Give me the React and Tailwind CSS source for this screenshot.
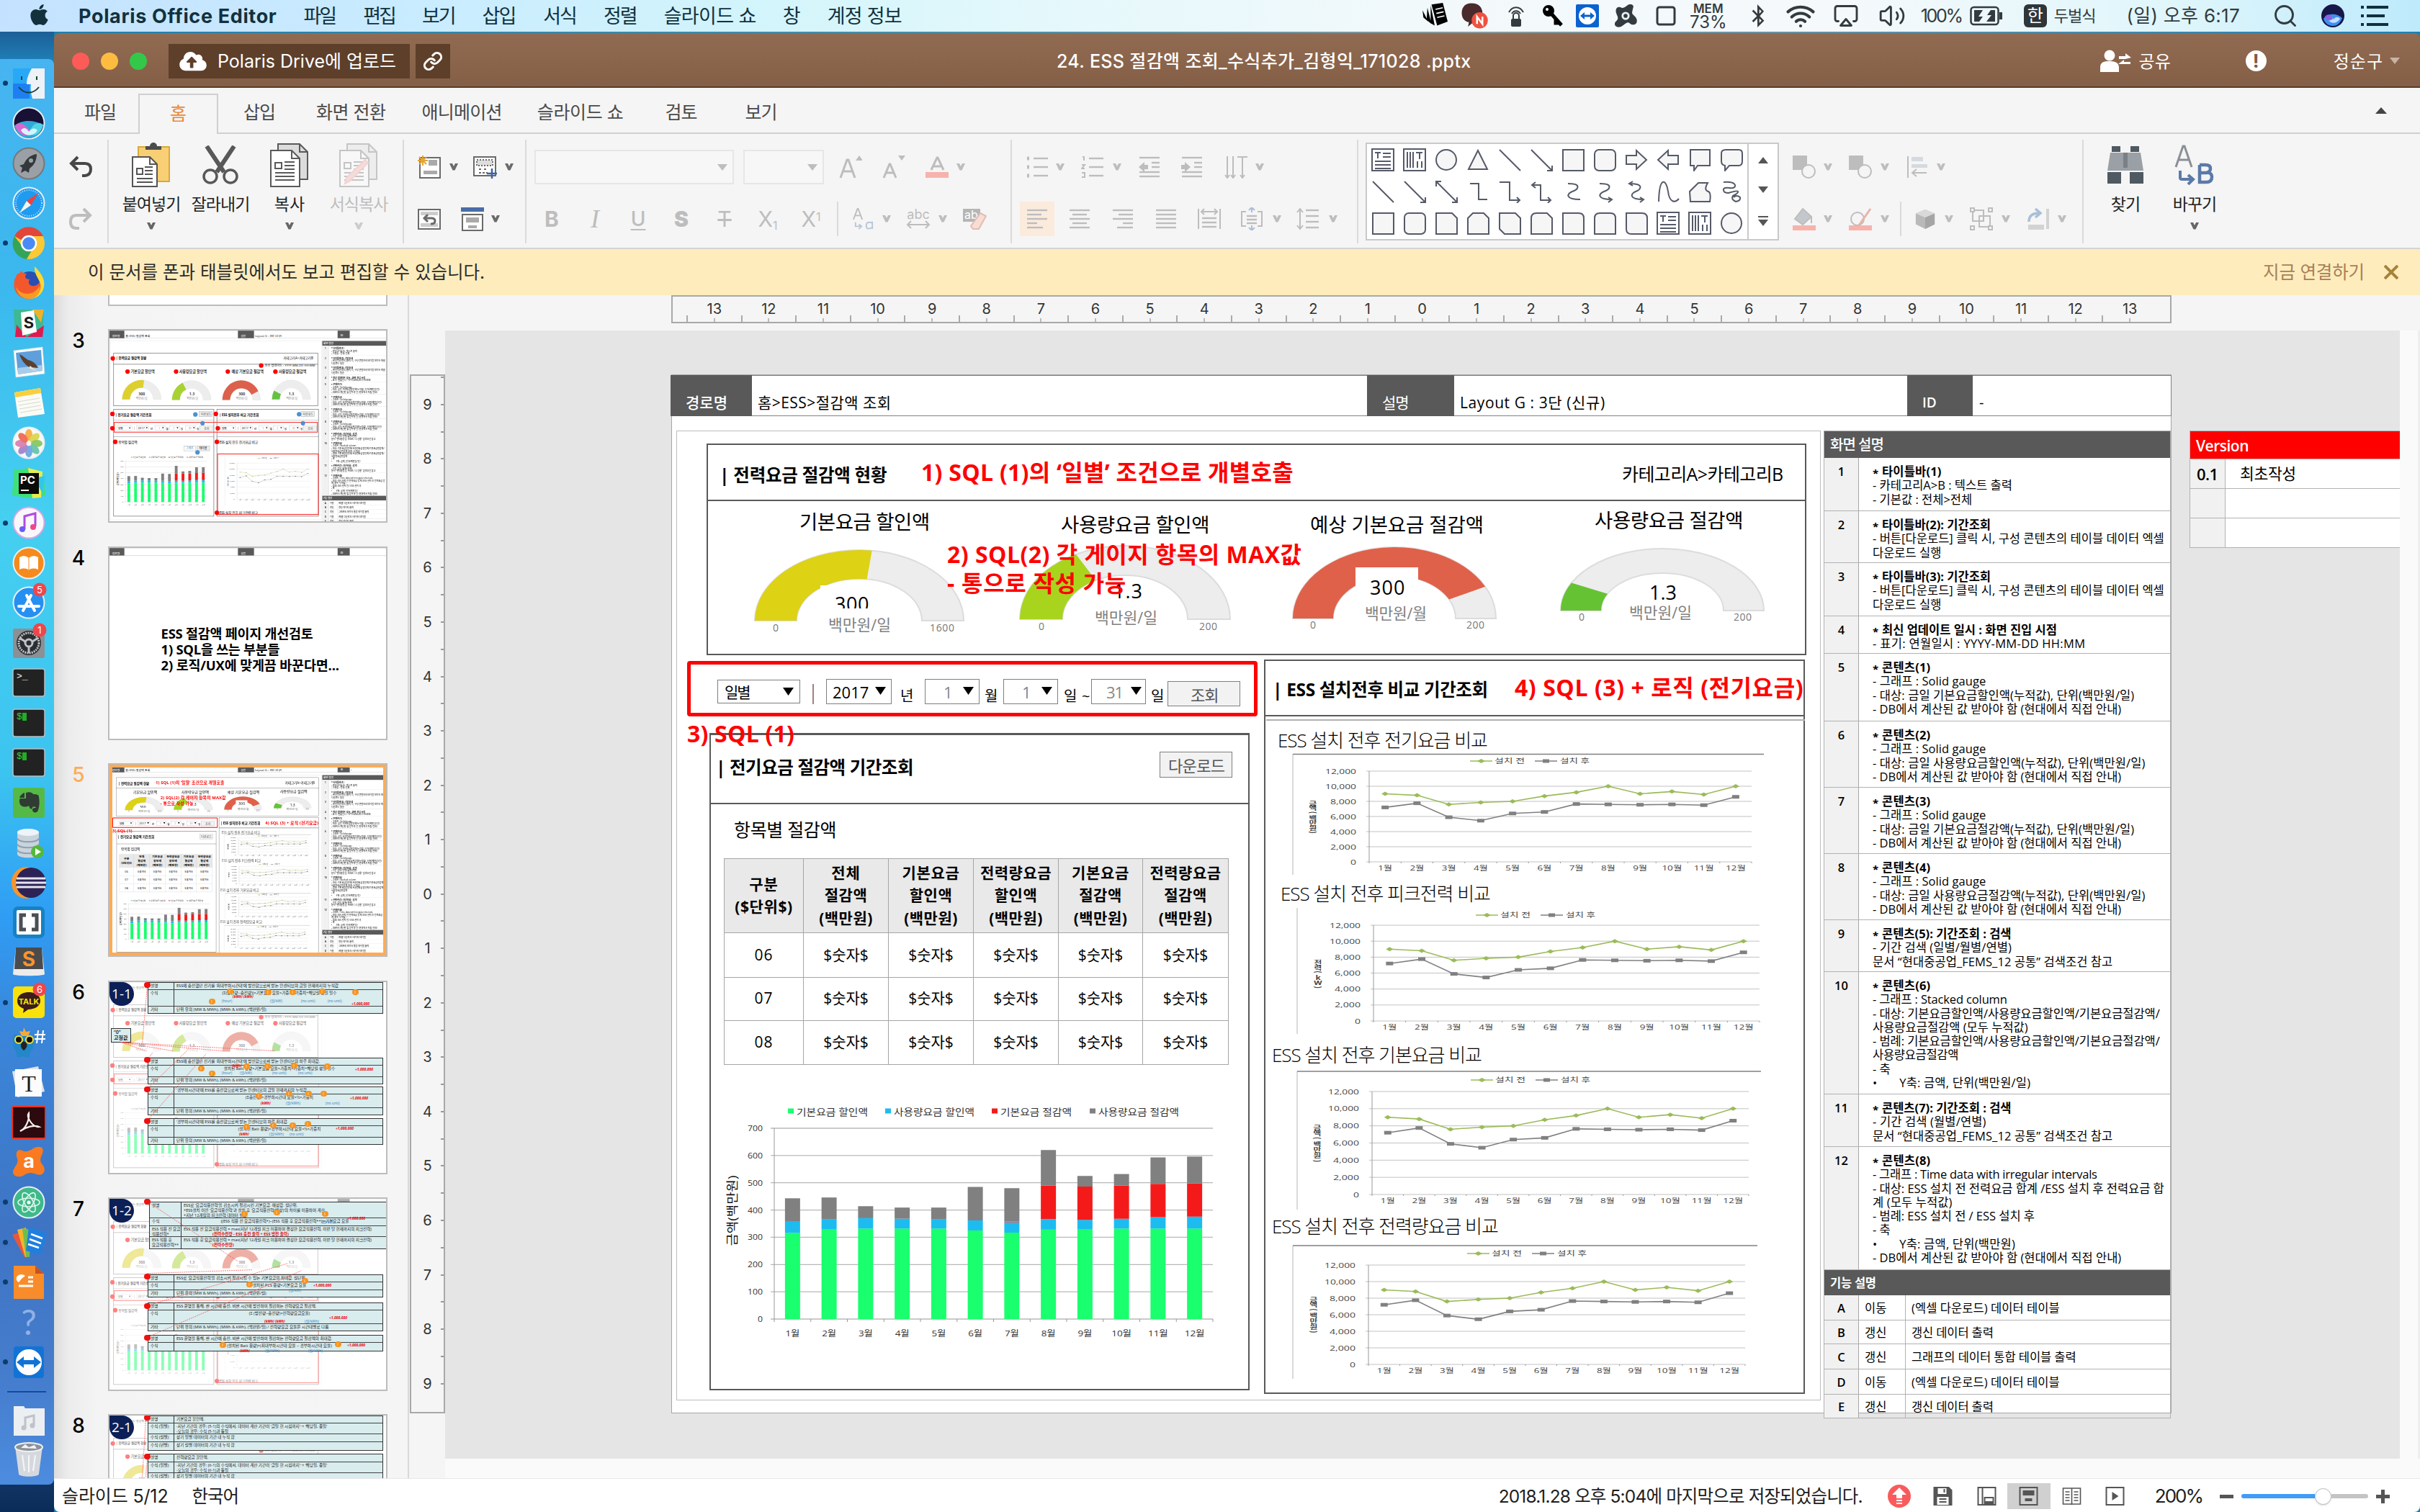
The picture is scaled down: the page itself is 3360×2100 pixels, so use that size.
import React, { useLayoutEffect, useRef } from "react";
import { FaApple, FaBluetoothB, FaCloudUploadAlt } from "react-icons/fa";
import { Wifi, Search, Volume2, Link, Airplay } from "lucide-react";

/* ---------- text helpers ---------- */

// Spreads a single line of text over a given width by adjusting its tracking.
function Fit({ w, className = "", children }) {
  const ref = useRef(null);
  useLayoutEffect(() => {
    const el = ref.current;
    el.style.letterSpacing = "0px";
    const n = el.textContent.length;
    if (w && n > 1) el.style.letterSpacing = (w - el.offsetWidth) / (n - 1) + "px";
  }, [w, children]);
  return (
    <span className={"inline-block whitespace-pre shrink-0 " + className}>
      <span ref={ref} className="inline-block whitespace-pre">{children}</span>
    </span>
  );
}

const OX = 932;
const OY = 520;

// A slide object placed on the canvas by its frame.
function Obj({ x, y, w, h, className = "", children }) {
  return (
    <div className={"absolute " + className} style={{ left: x - OX, top: y - OY, width: w, height: h }}>
      {children}
    </div>
  );
}

// A line of slide text: left edge, vertical centre and width.
function T({ x, cy, w, s, className = "", children }) {
  return (
    <div className={"absolute flex items-center h-10 leading-none " + className} style={{ left: x - OX, top: cy - 20 - OY, fontSize: s }}>
      <Fit w={w}>{children}</Fit>
    </div>
  );
}

const Chev = ({ className = "" }) => (
  <svg viewBox="0 0 14 10" className={"w-[14px] h-[10px] shrink-0 " + className} fill="currentColor">
    <path d="M1 0h4l2 4 2-4h4L8.500 9.500h-3z" />
  </svg>
);

const Svg = ({ vb = "0 0 32 32", className = "w-8 h-8", children, ...p }) => (
  <svg viewBox={vb} className={"shrink-0 " + className} fill="none" stroke="currentColor" strokeWidth="2" {...p}>
    {children}
  </svg>
);

/* ---------- menu bar ---------- */

function MenuBar() {
  return (
    <header className="h-[44px] shrink-0 flex items-center text-[27px] leading-none text-[#12313d] bg-[linear-gradient(90deg,#c4e2ff_0%,#c9ecff_18%,#d3f5fb_32%,#e4f8fb_43%,#f3f9fb_60%,#f5f9fb_76%,#dff6fb_90%,#bdeafc_100%)]">
      <FaApple className="ml-[39px] w-[31px] h-[33px] -mt-1 shrink-0" />
      <Fit w={275} className="ml-[39px] font-bold text-[27px]">Polaris Office Editor</Fit>
      <Fit w={47} className="ml-[37px]">파일</Fit>
      <Fit w={47} className="ml-[39px]">편집</Fit>
      <Fit w={48} className="ml-[38px]">보기</Fit>
      <Fit w={48} className="ml-[38px]">삽입</Fit>
      <Fit w={48} className="ml-[39px]">서식</Fit>
      <Fit w={48} className="ml-[38px]">정렬</Fit>
      <Fit w={129} className="ml-[38px]">슬라이드 쇼</Fit>
      <span className="ml-[37px]">창</span>
      <Fit w={104} className="ml-[37px]">계정 정보</Fit>
      <div className="ml-auto flex items-center h-full text-[#333b40]">
        <Svg className="w-9 h-9 text-black" fill="currentColor" stroke="none">
          <path d="M12 2l14-2 6 23-13 5z" /><path d="M11 3l5 25-5-3zM7 6l5 20-6-5zM1 9l7 14-6-5z" />
          <path d="M17 8l9-2M18 13l9-2M19 18l9-2" stroke="#fff" strokeWidth="1.500" />
        </Svg>
        <Svg className="ml-[17px] w-10 h-10" stroke="none">
          <path d="M13 2C5 2 2 7 2 13s4 10 8 10l-1 5 6-5c7 0 10-4 10-10S21 2 13 2z" fill="#4a2a2c" />
          <circle cx="22" cy="21" r="9" fill="#f0513f" /><path d="M19 25v-8l6 8v-8" stroke="#fff" strokeWidth="2" />
        </Svg>
        <Svg className="ml-[22px] w-8 h-9"><path d="M6 11c5-9 15-9 20 0M10 13c3-5 9-5 12 0M12 20v-4a4 4 0 0 1 8 0v4" /><rect x="9" y="20" width="14" height="11" rx="2" fill="currentColor" stroke="none" /></Svg>
        <Svg className="ml-[20px] w-8 h-8 text-black"><circle cx="9" cy="9" r="7" fill="currentColor" /><path d="M12 12l15 17M19 20v6h6" strokeWidth="5" /><circle cx="7" cy="7" r="2" fill="#fff" stroke="none" /></Svg>
        <Svg className="ml-[15px] w-8 h-8" stroke="none"><rect width="32" height="32" rx="2" fill="#0b62d0" /><circle cx="16" cy="16" r="12" fill="#fff" /><path d="M6 16l6-5v3.500h8V11l6 5-6 5v-3.500h-8V21z" fill="#0b62d0" /></Svg>
        <Svg className="ml-[19px] w-9 h-9" fill="currentColor" stroke="none"><path d="M20 2c4-1 7 1 5 5l-1 5c0 3 6 5 6 10 0 6-6 6-9 3-4-3-8 5-13 5-6 0-7-5-3-8 4-4-1-7-1-12 0-4 3-6 7-4 4 1 6-3 9-4z" /><circle cx="16" cy="16" r="5" fill="#e8f3f5" /><circle cx="16" cy="16" r="2.500" /></Svg>
        <Svg className="ml-[22px] w-8 h-8"><rect x="4" y="4" width="24" height="24" rx="3" strokeWidth="3" /></Svg>
        <div className="ml-[18px] w-[50px] flex flex-col items-center font-semibold leading-none"><span className="text-[17px] leading-[16px]">MEM</span><span className="text-[24px] leading-[21px] font-normal">73%</span></div>
        <FaBluetoothB className="ml-[32px] w-6 h-8" />
        <Wifi className="ml-[24px] w-[46px] h-[42px]" strokeWidth={2.4} />
        <Airplay className="ml-[20px] w-10 h-9" strokeWidth={1.9} fill="none" />
        <Volume2 className="ml-[22px] w-[44px] h-[38px]" strokeWidth={1.8} />
        <Fit w={59} className="ml-[18px] text-[25px]">100%</Fit>
        <Svg vb="0 0 46 28" className="ml-[11px] w-[46px] h-7"><rect x="1.500" y="2" width="38" height="24" rx="4" strokeWidth="2.500" /><path d="M42 10v8h2v-8z" fill="currentColor" /><path d="M6 6h12l-6 9h6l-5 7H6zM35 22H23l7-9h-6l5-7h6z" fill="currentColor" stroke="none" /></Svg>
        <div className="ml-[29px] w-8 h-[32px] rounded-[6px] bg-[#2f3539] text-white text-[24px] flex items-center justify-center">한</div>
        <Fit w={59} className="ml-[10px] text-[22px]">두벌식</Fit>
        <Fit w={157} className="ml-[43px] text-[26px]">(일) 오후 6:17</Fit>
        <Search className="ml-[45px] w-9 h-9" strokeWidth={1.9} />
        <svg viewBox="0 0 32 32" className="ml-[32px] w-8 h-8"><circle cx="16" cy="16" r="16" fill="#17174a" /><path d="M3 20c6-8 18-8 26-1-3 8-8 11-13 11S5 27 3 20z" fill="#3f8ff0" /><path d="M9 21c3-5 6-4 8 0 3-4 6-4 9-1-4 7-13 8-17 1z" fill="#bfe0ff" /><path d="M5 17c5-6 9-1 11 3-4 4-9 3-11-3z" fill="#8d62e0" /></svg>
        <Svg vb="0 0 38 32" className="ml-[23px] mr-[44px] w-[38px] h-8 text-[#10303c]"><path d="M0 4h4M8 4h30M0 16h4M8 16h25M0 28h4M8 28h30" strokeWidth="4" /></Svg>
      </div>
    </header>
  );
}

/* ---------- dock ---------- */

const Round = ({ fill, stroke = "#e9eef2", children }) => (
  <><circle cx="23" cy="23" r="21.500" fill={fill} stroke={stroke} strokeWidth="2" />{children}</>
);
const Badge = ({ n }) => (
  <><circle cx="38" cy="5" r="9.500" fill="#f0464b" /><text x="38" y="9.500" fontSize="13" textAnchor="middle" fill="#fff">{n}</text></>
);
const Term = ({ label, color }) => (
  <><rect x="1" y="4" width="44" height="38" rx="3" fill="#222" stroke="#b9bec2" strokeWidth="1.500" /><text x="6" y="18" fontSize="13" fontFamily="Liberation Mono" fill={color}>{label}</text></>
);

const dockIcons = [
  { dot: true, el: <><rect x="1" y="2" width="44" height="42" rx="2" fill="#28a9f7" /><path d="M1 23h23v21H1z" fill="#1f7ff2" /><path d="M27 2c-5 9-7 15-7 22h6c-1 7 0 13 2 20h17V2z" fill="#eef1f6" /><path d="M13 13v5M34 13v5M9 28c8 10 20 10 28 0" fill="none" stroke="#143" strokeWidth="2" /></> },
  { el: <Round fill="#191036"><path d="M3 27c9-9 28-9 40-1-3 11-11 18-20 18S6 38 3 27z" fill="#2fa9d8" /><path d="M4 26c9-7 17 2 22 10-4 8-18 5-22-10z" fill="#d668d0" /><path d="M43 25c-10-6-16 2-20 11 6 8 17 3 20-11z" fill="#4fd3e6" /><path d="M12 33c4-5 8-3 11 2 4-5 8-6 12-2-5 9-18 9-23 0z" fill="#d5f4ff" /></Round> },
  { el: <Round fill="#9aa0a6" stroke="#777"><path d="M34 10c-9 1-15 7-18 14l-6 2 4 3-2 7 6-3 5 3 1-6c6-4 10-11 10-20z" fill="#34383c" /><circle cx="26" cy="19" r="3" fill="#9aa0a6" /></Round> },
  { el: <Round fill="#1f9bf0"><circle cx="23" cy="23" r="18" fill="none" stroke="#bfe6ff" strokeDasharray="1 2" strokeWidth="2" /><path d="M36 9L20 20l6 6z" fill="#f0413a" /><path d="M10 37l10-17 6 6z" fill="#f3f3f3" /></Round> },
  { dot: true, el: <><circle cx="23" cy="23" r="22" fill="#fcc934" /><path d="M3 13A22 22 0 0 1 43 13H23a10 10 0 0 0-9 6z" fill="#e2463a" /><path d="M3 13a22 22 0 0 0 17 32l8-14a10 10 0 0 1-14-4z" fill="#35a458" /><circle cx="23" cy="23" r="10" fill="#4a8af4" stroke="#fff" strokeWidth="2.500" /></> },
  { el: <><circle cx="24" cy="24" r="17" fill="#2a4fb0" /><path d="M12 6c2 3 5 4 8 4-4 5-1 8 4 8-3 5 0 10 7 9 5-1 8-5 8-10 5 16-3 28-16 28C9 45 0 34 3 20c1-5 3-6 4-10 2 1 4-1 5-4z" fill="#f3582c" /><path d="M31 0c8 8 15 17 13 28-2 12-12 17-20 17 12-5 17-12 15-21-2-7-9-14-8-24z" fill="#fcd836" /><path d="M5 28c4 8 12 12 22 9 5-2 9-6 11-10 2 12-6 18-15 18S7 39 5 28z" fill="#fb9a20" /></> },
  { el: <><path d="M2 4h42l-2 38H4z" fill="#3eb991" /><path d="M28 4h16l-4 18z" fill="#ecb22e" /><path d="M4 42l2-17 14 17zM20 42h22l2-16z" fill="#e01a50" /><path d="M12 8l18-3 4 30-20 5z" fill="#fff" /><text x="23" y="30" fontSize="22" fontWeight="bold" textAnchor="middle" fill="#1b1b1b">S</text></> },
  { el: <><path d="M2 6l40-5 3 37-40 5z" fill="#fff" stroke="#c8d4dc" strokeDasharray="2 1" /><path d="M5 9l35-4 2 29-34 5z" fill="#5f9fdc" /><path d="M8 30l33-4 1 8-34 5z" fill="#a8cdea" /><path d="M10 11c6 3 9 6 12 8 6 1 11 5 14 11l-12-1c-6-3-11-9-14-18z" fill="#5a4030" /><path d="M25 27l9 8-11-5z" fill="#e8e0d0" /></> },
  { el: <><path d="M3 8l36-6 6 36-37 5z" fill="#fbfbf6" /><path d="M3 8l36-6 1 7L4 15z" fill="#f9cf3f" /><path d="M8 21l30-5M9 26l30-5M10 31l30-5M11 36l30-5" stroke="#d8d8d0" /></> },
  { el: <Round fill="#f7f7f5"><g opacity=".85"><ellipse cx="23" cy="12" rx="5" ry="8" fill="#f7a72d" /><ellipse cx="31" cy="16" rx="5" ry="8" transform="rotate(50 31 16)" fill="#d9d33a" /><ellipse cx="34" cy="24" rx="8" ry="5" fill="#7ec352" /><ellipse cx="31" cy="32" rx="5" ry="8" transform="rotate(-45 31 32)" fill="#57bfa2" /><ellipse cx="23" cy="35" rx="5" ry="8" fill="#5e9ede" /><ellipse cx="15" cy="32" rx="5" ry="8" transform="rotate(45 15 32)" fill="#9a77c7" /><ellipse cx="12" cy="24" rx="8" ry="5" fill="#d674a8" /><ellipse cx="15" cy="16" rx="5" ry="8" transform="rotate(-45 15 16)" fill="#ef5a43" /></g></Round> },
  { el: <><path d="M2 5l22-3 20 14 2 24-22 4-24-4z" fill="#3fe07c" /><path d="M22 2l20 5-2 36-12 1z" fill="#e5ee4e" /><path d="M30 16l16-3-4 24z" fill="#30c8e8" /><rect x="9" y="9" width="28" height="29" fill="#0b0b0b" /><text x="11" y="24" fontSize="15" fontWeight="bold" fill="#fff">PC</text><path d="M12 33h11" stroke="#fff" strokeWidth="2" /></> },
  { dot: true, el: <Round fill="#faf7fb" stroke="#d9a5e6"><path d="M17 32V14l15-4v18" fill="none" stroke="#b04be0" strokeWidth="3" /><circle cx="14" cy="32" r="4" fill="#6a5df2" /><circle cx="29" cy="29" r="4" fill="#f2468c" /></Round> },
  { el: <Round fill="#f68a1c"><path d="M10 15c5-3 10-2 13 1 3-3 8-4 13-1v17c-5-2-10-2-13 1-3-3-8-3-13-1z" fill="#fff" /><path d="M23 16v17" stroke="#f68a1c" /></Round> },
  { el: <><Round fill="#2690f2"><path d="M15 34l11-21M31 34L20 13M9 28h28" stroke="#fff" strokeWidth="4" strokeLinecap="round" /></Round><Badge n="5" /></> },
  { el: <><rect x="1" y="3" width="44" height="41" rx="3" fill="#8b9095" /><circle cx="23" cy="23" r="17" fill="#2c2f32" /><circle cx="23" cy="23" r="14" fill="none" stroke="#bfc3c7" strokeWidth="3" strokeDasharray="2 1.200" /><circle cx="23" cy="23" r="5" fill="none" stroke="#bfc3c7" strokeWidth="3" /><path d="M23 28v9M18 21l-8-5M28 21l8-5" stroke="#bfc3c7" strokeWidth="3" /><Badge n="1" /></> },
  { el: <Term label=">_" color="#f4f4f4" /> },
  { el: <><Term label="$" color="#35d435" /><path d="M14 9h6v11h-6z" fill="#1fae25" /></> },
  { el: <><Term label="$" color="#35d435" /><path d="M14 9h6v11h-6z" fill="#1fae25" /></> },
  { el: <><rect x="1" y="2" width="44" height="42" rx="3" fill="#55b948" /><path d="M17 9v7H10c0-2 5-7 7-7zM19 9c6-2 9 0 10 2 6 0 8 1 8 4 1 6 1 12-1 18-1 5-8 4-8 0 0-3 3-3 5-3-1-3-6-2-6 2-3-1-3-3-4-5-5 3-13 2-13-6 0-2 0-3 1-4h8z" fill="#2f3b33" /></> },
  { el: <><path d="M7 9v30c0 7 30 7 30 0V9z" fill="#c9d3dc" /><path d="M7 17c0 7 30 7 30 0M7 25c0 7 30 7 30 0M7 33c0 7 30 7 30 0" fill="none" stroke="#8fa0ae" strokeWidth="2" /><ellipse cx="22" cy="9" rx="15" ry="5" fill="#eef4fa" /><circle cx="35" cy="36" r="9" fill="#54b93a" /><path d="M32 31v10l8-5z" fill="#fff" /></> },
  { el: <><ellipse cx="19" cy="23" rx="20" ry="22" fill="#f8942a" /><ellipse cx="26" cy="23" rx="21" ry="21" fill="#2d2255" /><path d="M6 17h40M5 23h42M6 29h40" stroke="#e6e4ef" strokeWidth="3" /></> },
  { el: <><rect x="1" y="1" width="44" height="44" rx="7" fill="#1681c4" /><rect x="6" y="6" width="34" height="34" rx="2" fill="#fff" /><path d="M19 13h-7v20h7M27 13h7v20h-7" fill="none" stroke="#4a4f54" strokeWidth="5" /></> },
  { el: <><path d="M5 2h36l4 37c0 3-44 3-44 0z" fill="#ececec" /><path d="M5 2h36l2 30H3z" fill="#4a4b4d" /><text x="23" y="28" fontSize="28" fontWeight="bold" textAnchor="middle" fill="#f9952a">S</text></> },
  { dot: true, el: <><rect x="1" y="1" width="44" height="44" rx="5" fill="#fae10c" /><path d="M23 9c-10 0-16 5-16 12s5 9 9 11l-1 6 7-5c10 0 17-5 17-12S33 9 23 9z" fill="#3a1d1c" /><text x="23" y="26" fontSize="11" fontWeight="bold" textAnchor="middle" fill="#fae10c">TALK</text><Badge n="6" /></> },
  { el: <><path d="M2 12c5-1 8 2 14 2s9-2 14 2c2 8 0 16-5 20l-2 8-8-2-8 2-2-9c-4-6-5-14-3-23z" fill="#2387c9" /><path d="M10 7l5 1 1-6 3 6 6-1-3 7H13z" fill="#f3a93b" /><circle cx="9" cy="19" r="5" fill="#111" stroke="#f5e22a" strokeWidth="2" /><circle cx="24" cy="19" r="5" fill="#111" stroke="#f5e22a" strokeWidth="2" /><path d="M16 21c6 3 6 8 0 13-6-5-5-10 0-13z" fill="#222" /><path d="M31 12h15M31 18h15M36 6l-2 18M43 6l-2 18" stroke="#fff" strokeWidth="2" /></> },
  { el: <><path d="M0 8l36-7 9 35-38 8z" fill="#dfe3e6" /><rect x="4" y="5" width="37" height="38" fill="#fcfcfc" /><text x="23" y="36" fontSize="32" fontFamily="Liberation Serif" textAnchor="middle" fill="#1c1c1c">T</text></> },
  { el: <><rect x="0" y="1" width="46" height="44" rx="2" fill="#2c0a0e" stroke="#f0301c" strokeWidth="2" /><path d="M11 35c7-3 13-14 12-25-4 5 5 20 14 19-6-3-18 0-26 6z" fill="none" stroke="#f7f0ee" strokeWidth="2.200" /></> },
  { el: <><path d="M14 7c6 3 10 0 17-4 8-3 14 0 11 8-3 7-5 10 1 17 5 8-1 15-9 12-8-3-12-3-19 2C6 46-2 40 2 33c3-6 7-9 5-15C4 11 6 4 14 7z" fill="#f97a20" /><text x="23" y="31" fontSize="27" fontWeight="bold" textAnchor="middle" fill="#fff">a</text></> },
  { dot: true, el: <Round fill="#3fb98a"><g fill="none" stroke="#dff7ec" strokeWidth="1.600"><ellipse cx="23" cy="23" rx="15" ry="6" /><ellipse cx="23" cy="23" rx="15" ry="6" transform="rotate(60 23 23)" /><ellipse cx="23" cy="23" rx="15" ry="6" transform="rotate(-60 23 23)" /></g><circle cx="23" cy="23" r="2.500" fill="#fff" /></Round> },
  { dot: true, el: <><path d="M0 13l12-4 10 32-5 3z" fill="#e9573a" /><path d="M7 6l12-3 4 40-5 1z" fill="#f6b32e" /><path d="M14 4l12 2-2 38-5-1z" fill="#6cbf4b" /><path d="M23 2l25 9-9 30-20-6z" fill="#1f7fe0" /><path d="M26 12l16 6M24 19l16 6M22 26l15 5" stroke="#fff" strokeWidth="2.500" /></> },
  { dot: true, el: <><path d="M2 0h30l12 11v35H2z" fill="#f88c2a" /><path d="M32 0l12 11H32z" fill="#c8541c" /><path d="M9 23a7 6 0 1 1 9-9l-5 4z" fill="#fff" /><path d="M22 16h7M22 22h7M9 28h20" stroke="#fff" strokeWidth="3" /></> },
  { el: <text x="23" y="41" fontSize="48" textAnchor="middle" fill="#8fb2e6" fontFamily="Lato">?</text> },
  { dot: true, el: <><rect x="2" y="1" width="42" height="44" rx="4" fill="#1173d6" /><ellipse cx="23" cy="23" rx="18" ry="18" fill="#fff" /><path d="M6 23l10-8v5h14v-5l10 8-10 8v-5H16v5z" fill="#1173d6" /></> },
];

function DockIcon({ item }) {
  return (
    <div className="h-[55.5px] shrink-0 flex items-center">
      <span className={"ml-1 w-[7px] h-[7px] rounded-full " + (item.dot ? "bg-[#0b3d6e]" : "")} />
      <svg viewBox="0 0 46 46" className="ml-[6px] w-[46px] h-[46px] overflow-visible font-['Inter',sans-serif]">{item.el}</svg>
    </div>
  );
}

function Dock() {
  return (
    <aside className="w-[75px] shrink-0 h-full flex flex-col bg-[linear-gradient(180deg,#1c5f96_0%,#1f7fb8_2%,#12386a_97%,#0b2c58_100%)] pt-[38px]">
      <div className="h-[1980px] flex flex-col rounded-r-lg pt-[6px] bg-[linear-gradient(180deg,#46b4f0_0%,#3bb8ee_16%,#45cff0_32%,#3cc4f0_50%,#2f9df4_60%,#3a86da_68%,#3f74c4_82%,#457ccc_92%,#4c8cdf_100%)]">
        {dockIcons.map((d, i) => <DockIcon key={i} item={d} />)}
        <div className="mt-[12px] ml-[10px] w-[54px] h-[2px] bg-[#17499a]" />
        <svg viewBox="0 0 46 46" className="mt-4 ml-[17px] w-[46px] h-[46px] shrink-0">
          <path d="M2 3h14l2 3h27v38H2z" fill="#eceff2" /><path d="M18 33V19l12-3v14" fill="none" stroke="#bfc3c8" strokeWidth="3" /><circle cx="16" cy="33" r="3.500" fill="#bfc3c8" /><circle cx="28" cy="30" r="3.500" fill="#bfc3c8" />
        </svg>
        <svg viewBox="0 0 46 50" className="mt-[7px] ml-[17px] w-[46px] h-[50px] shrink-0">
          <path d="M4 6h38l-5 38c0 5-28 5-28 0z" fill="#d5d9de" /><ellipse cx="23" cy="7" rx="19" ry="6" fill="#8c9197" stroke="#eef1f4" strokeWidth="2" /><path d="M12 8l6-5 5 4 8-3 3 5" fill="#f3f3f3" /><path d="M14 18l3 22M23 18v24M32 18l-3 22" stroke="#f4f6f8" strokeWidth="2" />
        </svg>
      </div>
    </aside>
  );
}

/* ---------- window chrome ---------- */

function TitleBar() {
  return (
    <div className="h-[76px] shrink-0 flex items-center pt-[3px] text-white bg-[linear-gradient(180deg,#916b51,#845f47)] border-b-2 border-[#5c3b25] rounded-t-lg">
      <span className="ml-[25px] w-6 h-6 rounded-full bg-[#fc5b57]" />
      <span className="ml-4 w-6 h-6 rounded-full bg-[#fdbc40]" />
      <span className="ml-4 w-6 h-6 rounded-full bg-[#34c84a]" />
      <div className="ml-[30px] w-[335px] h-12 bg-[#5e3f2a] flex items-center pt-[3px]">
        <FaCloudUploadAlt className="ml-[15px] w-[38px] h-[30px] -mt-[3px]" />
        <Fit w={248} className="ml-[15px] text-[25px]">Polaris Drive에 업로드</Fit>
      </div>
      <div className="ml-2 w-12 h-12 bg-[#5e3f2a] flex items-center justify-center"><Link className="w-7 h-7" strokeWidth={2.6} /></div>
      <Fit w={575} className="ml-[842px] text-[25px] font-medium mt-[3px]">24. ESS 절감액 조회_수식추가_김형익_171028 .pptx</Fit>
      <Svg vb="0 0 44 32" className="ml-[873px] w-[44px] h-8" fill="currentColor" stroke="none">
        <circle cx="13" cy="8" r="7.500" /><path d="M0 31V25c0-8 5-9 13-9s13 2 13 9v6zM26 9h9V5l8 6-8 2H26zM42 17h-9v-3l-8 6h17zM42 20z" />
      </Svg>
      <Fit w={44} className="ml-[10px] text-[24px] mt-[3px]">공유</Fit>
      <div className="ml-[104px] w-[29px] h-[29px] rounded-full bg-white text-[#7d5a43] text-[26px] font-bold leading-none flex items-center justify-center">!</div>
      <Fit w={68} className="ml-[93px] text-[24px] mt-[3px]">정순구</Fit>
      <svg viewBox="0 0 14 9" className="ml-[9px] w-[14px] h-[9px]"><path d="M0 0h14L7 9z" fill="#c9b4a4" /></svg>
    </div>
  );
}

function Tabs() {
  return (
    <div className="h-[64px] shrink-0 flex items-center text-[25px] text-[#4a4a4a] bg-[#f5f5f5] leading-none">
      <div className="w-[117px] h-full border-b-2 border-[#cfcfcf] flex items-center pt-[6px]"><Fit w={45} className="ml-[42px]">파일</Fit></div>
      <div className="w-[111px] h-[56px] mt-2 border-2 border-b-0 border-[#cfcfcf] flex items-center justify-center pb-[2px] text-[#e8893d]">홈</div>
      <div className="flex-1 h-full border-b-2 border-[#cfcfcf] flex items-center pt-[6px]">
        <Fit w={45} className="ml-[35px]">삽입</Fit>
        <Fit w={97} className="ml-[57px]">화면 전환</Fit>
        <Fit w={112} className="ml-[50px]">애니메이션</Fit>
        <Fit w={120} className="ml-[49px]">슬라이드 쇼</Fit>
        <Fit w={45} className="ml-[58px]">검토</Fit>
        <Fit w={45} className="ml-[67px]">보기</Fit>
        <svg viewBox="0 0 16 9" className="ml-auto mr-[46px] mb-[5px] w-[16px] h-[9px]"><path d="M0 9L8 0l8 9z" fill="#444" /></svg>
      </div>
    </div>
  );
}

/* ---------- ribbon ---------- */

const Sep = () => <div className="w-[2px] h-[144px] mt-2 shrink-0 bg-[#dadada]" />;
const Rows = ({ className = "", children }) => <div className={"pt-6 flex flex-col gap-7 shrink-0 " + className}>{children}</div>;
const Row = ({ className = "", children }) => <div className={"h-11 flex items-center " + className}>{children}</div>;

function Big({ icon, label, w, chev, className = "text-[#222]", chevClass = "text-[#666]" }) {
  return (
    <div className={"w-24 shrink-0 flex flex-col items-center pt-[12px] " + className}>
      <div className="h-[62px] flex items-center">{icon}</div>
      <div className="mt-[11px] h-[26px] flex items-center text-[23px] leading-none"><Fit w={w}>{label}</Fit></div>
      {chev && <Chev className={"mt-[12px] " + chevClass} />}
    </div>
  );
}

const PasteIcon = (
  <Svg vb="0 0 54 62" className="w-[54px] h-[62px] text-[#555]">
    <path d="M9 6h43v48H9z" fill="#f8cf74" stroke="#d9a93c" /><path d="M19 10V5h6a5 5 0 0 1 10 0h6v5z" fill="#4c4c4c" stroke="none" />
    <path d="M1 20h24l10 10v31H1z" fill="#fff" /><path d="M25 20v10h10M7 36h8v8H7zM18 34h11M18 39h11M18 44h11M7 50h22M7 55h22" />
  </Svg>
);
const CutIcon = (
  <Svg vb="0 0 50 54" className="w-[50px] h-[54px] text-[#585858]">
    <path d="M6 1l24 36M44 1L20 37" strokeWidth="6" /><circle cx="11" cy="43" r="9" strokeWidth="3.500" /><circle cx="39" cy="43" r="9" strokeWidth="3.500" />
  </Svg>
);
const CopyIcon = ({ brush }) => (
  <Svg vb="0 0 54 62" className="w-[54px] h-[62px] text-[#5a5a5a]">
    <path d="M11 2h30l11 11v38H11z" fill="#dcdcdc" /><path d="M41 2v11h11" />
    <path d="M1 11h29l11 11v39H1z" fill="#fff" /><path d="M30 11v11h11M7 28h9v8H7zM20 27h14M20 32h14M20 37h14M7 42h27M7 47h27M7 52h27" />
    {brush && <path d="M36 24l4 4-26 26-6 3 2-8z" fill="#f2a6a0" stroke="#e88" />}
  </Svg>
);

const lines = (arr) => arr.map(([x, y, w], i) => <path key={i} d={`M${x} ${y}h${w}`} strokeWidth="2.400" />);

const shapeIcons = [
  <><rect x="1" y="1" width="30" height="30" /><path d="M5 6h8M9 6v8M16 7h11M16 12h11M5 18h22M5 23h22M5 28h22" /></>,
  <><rect x="1" y="1" width="30" height="30" /><path d="M6 5v22M10 5v22M14 5v22M18 6h9M23 6v9M20 18v9M26 18v9" /></>,
  <ellipse cx="16" cy="16" rx="14" ry="14" fill="#f6f6f6" />,
  <path d="M16 3l13 26H3z" fill="#f6f6f6" />,
  <path d="M2 2l29 29" />,
  <path d="M2 2l29 29v-7M31 31h-7" />,
  <rect x="2" y="2" width="29" height="29" fill="#f6f6f6" />,
  <rect x="2" y="2" width="29" height="29" rx="6" fill="#f6f6f6" />,
  <path d="M2 10h14V3l14 13-14 13v-7H2z" fill="#f6f6f6" />,
  <path d="M30 10H16V3L2 16l14 13v-7h14z" fill="#f6f6f6" />,
  <path d="M3 2h27v22H13l-5 7v-7H3z" fill="#f6f6f6" />,
  <path d="M8 2h18q5 0 5 5v11q0 6-5 6H13l-6 7v-7q-5-1-5-6V7q0-5 6-5z" fill="#f6f6f6" />,
  <path d="M2 2l29 29" />,
  <path d="M2 2l29 29v-7M31 31h-7" />,
  <path d="M2 9V2h7M2 2l29 29v-7M31 31h-7" />,
  <path d="M5 5h12v22h12" />,
  <path d="M2 3h14v25h14M26 24l4 4-4 4" />,
  <path d="M8 3l-5 4 5 4M4 7h11v21h14M25 24l4 4-4 4" />,
  <path d="M9 5c20 0 14 8 6 11s-10 11 11 11" />,
  <path d="M9 5c20 0 14 8 6 11s-10 11 11 11M21 24l5 3-5 4" />,
  <path d="M11 2L6 5l5 3M6 5c22 0 16 8 9 11s-10 11 11 11M21 24l5 3-5 4" />,
  <path d="M3 30C4-8 14 0 16 16s10 16 15 10" />,
  <path d="M14 4h13q-6 10 1 12 4 2 2 14H3L2 16z" fill="#f6f6f6" />,
  <path d="M5 3q14-1 16 4 1 5-8 4T5 14q0 4 7 4 12-4 13-2t-7 6q-3 5 4 8 7-1 6-6-5-4-9 0" />,
  <rect x="2" y="2" width="29" height="29" fill="#f6f6f6" />,
  <rect x="2" y="2" width="29" height="29" rx="6" fill="#f6f6f6" />,
  <path d="M2 2h22l7 7v22H2z" fill="#f6f6f6" />,
  <path d="M9 2h15l7 7v22H2V9z" fill="#f6f6f6" />,
  <path d="M2 2h22l7 7v22H9l-7-7z" fill="#f6f6f6" />,
  <path d="M2 9q0-7 7-7h15l7 7v22H2z" fill="#f6f6f6" />,
  <path d="M2 2h22q7 0 7 7v22H2z" fill="#f6f6f6" />,
  <path d="M9 2h15q7 0 7 7v22H2V9q0-7 7-7z" fill="#f6f6f6" />,
  <path d="M2 2h22q7 0 7 7v22H9q-7 0-7-7z" fill="#f6f6f6" />,
  <><rect x="1" y="1" width="30" height="30" /><path d="M5 6h8M9 6v8M16 7h11M16 12h11M5 18h22M5 23h22M5 28h22" /></>,
  <><rect x="1" y="1" width="30" height="30" /><path d="M6 5v22M10 5v22M14 5v22M18 6h9M23 6v9M20 18v9M26 18v9" /></>,
  <ellipse cx="16" cy="16" rx="14" ry="14" fill="#f6f6f6" />,
];

const Tri = ({ up, className = "w-[14px] h-[9px]" }) => (
  <svg viewBox="0 0 14 9" className={className} fill="currentColor"><path d={up ? "M0 9L7 0l7 9z" : "M0 0h14L7 9z"} /></svg>
);

function Ribbon() {
  return (
    <div className="h-[160px] shrink-0 flex items-start bg-[#f5f5f5] border-b-2 border-[#d4d4d4] text-[#bdbdbd]">
      <Rows className="w-[74px] items-center">
        <Row className="text-[#474747]"><Svg className="w-[34px] h-8" strokeWidth="4"><path d="M2 11h20q8 0 8 8t-8 9h-4M12 2L3 11l9 9" /></Svg></Row>
        <Row><Svg className="w-[34px] h-8" strokeWidth="4"><path d="M30 11H10q-8 0-8 9t8 9h4M20 2l9 9-9 9" /></Svg></Row>
      </Rows>
      <Sep />
      <div className="w-[408px] pl-[11px] flex">
        <Big icon={PasteIcon} label="붙여넣기" w={82} chev />
        <Big icon={CutIcon} label="잘라내기" w={82} />
        <Big icon={<CopyIcon />} label="복사" w={42} chev />
        <Big icon={<span className="opacity-30"><CopyIcon brush /></span>} label="서식복사" w={82} chev className="text-[#bdbdbd]" chevClass="text-[#ccc]" />
      </div>
      <Sep />
      <Rows className="w-[168px] pl-[18px] text-[#6a6a6a]">
        <Row>
          <Svg className="w-[34px] h-8"><rect x="3" y="3" width="28" height="28" fill="#fff" /><path d="M15 6h12v8H15zM8 21h19v5H8z" fill="#aaa" stroke="none" /><path d="M7 0v14M0 7h14M2 2l10 10M12 2L2 12" stroke="#e2a536" /></Svg>
          <Chev className="ml-[10px]" />
          <Svg className="ml-[19px] w-[34px] h-8"><rect x="1" y="2" width="30" height="26" fill="#fff" /><path d="M5 6h22v8H5z" strokeDasharray="2 2" fill="#ddd" /><path d="M8 19h4M15 19h4M8 24h12" strokeDasharray="3 2" /><path d="M26 18v14M19 25h14" stroke="#3c62a8" strokeWidth="2.500" /></Svg>
          <Chev className="ml-[10px]" />
        </Row>
        <Row>
          <Svg className="w-[34px] h-8"><rect x="1" y="3" width="30" height="27" fill="#fff" /><path d="M4 6h24v5H4zM4 22h24v5H4z" fill="#ccc" stroke="none" /><path d="M10 15h9q5 0 5 4t-6 4M14 10l-5 5 5 5" strokeWidth="3" /></Svg>
          <Svg className="ml-[27px] w-[32px] h-[34px]"><path d="M0 0h32v6H0z" fill="#4a6ca8" stroke="none" /><rect x="2" y="10" width="28" height="22" fill="#fff" /><path d="M7 14h18v7H7zM10 25h12v4H10z" fill="#aaa" stroke="none" /></Svg>
          <Chev className="ml-[9px]" />
        </Row>
      </Rows>
      <Sep />
      <Rows className="w-[672px]">
        <Row>
          <div className="ml-[11px] w-[277px] h-12 border-2 border-[#e6e6e6] bg-[#f7f7f7] flex items-center justify-end pr-[7px]"><Tri /></div>
          <div className="ml-[13px] w-[112px] h-12 border-2 border-[#e6e6e6] bg-[#f7f7f7] flex items-center justify-end pr-[7px]"><Tri /></div>
          <Svg className="ml-[21px] w-8 h-8"><path d="M2 31L11 6h2l9 25M6 22h12" strokeWidth="3" /><path d="M23 7l5-7 5 7z" fill="currentColor" stroke="none" /></Svg>
          <Svg className="ml-[28px] w-8 h-8"><path d="M2 31L10 12h1l8 19M6 24h10" strokeWidth="3" /><path d="M22 0h10l-5 7z" fill="currentColor" stroke="none" /></Svg>
          <Svg className="ml-[27px] w-[34px] h-8"><path d="M8 20L16 3h1l8 17M11 15h11" strokeWidth="3" /><path d="M0 23h32v8H0z" fill="#f7b2ac" stroke="none" /></Svg>
          <Chev className="ml-[9px]" />
        </Row>
        <Row className="text-[30px] leading-none">
          <span className="ml-[5px] w-[60px] text-center font-bold">B</span>
          <span className="w-[60px] text-center italic font-['Liberation_Serif',serif] text-[36px]">I</span>
          <span className="w-[60px] text-center font-medium underline underline-offset-4 text-[28px]">U</span>
          <span className="w-[60px] text-center font-black">S</span>
          <span className="w-[60px] text-center line-through">T</span>
          <span className="w-[60px] text-center">X<sub className="text-[16px]">1</sub></span>
          <span className="w-[60px] text-center">X<sup className="text-[16px]">1</sup></span>
          <span className="ml-[6px] w-[2px] h-12 bg-[#dadada]" />
          <Svg className="ml-[20px] w-[30px] h-8"><path d="M1 17L7 1h1l6 16M3 11h9" /><path d="M4 21v6h8M9 24l4 3-4 4M29 20v11M29 22q-9-3-9 4t9 3" stroke="#b9c6d8" /></Svg>
          <Chev className="ml-[10px]" />
          <div className="ml-[20px] w-[34px] flex flex-col items-center text-[18px] leading-[16px]"><span>abc</span><Svg vb="0 0 34 12" className="w-[34px] h-3"><path d="M2 6h30M7 1L2 6l5 5M27 1l5 5-5 5" /></Svg></div>
          <Chev className="ml-[10px]" />
          <Svg className="ml-[20px] w-[34px] h-8"><path d="M0 2h24v18H0z" fill="#b5b5b5" stroke="none" /><text x="2" y="16" fontSize="16" fill="#fff" stroke="none">ab</text><path d="M24 8l8 4-10 18H14l-3-4z" fill="#f8ddd4" stroke="#e2bdb2" /></Svg>
        </Row>
      </Rows>
      <Sep />
      <Rows className="w-[479px]">
        <Row>
          <Svg className="ml-[18px] w-8 h-8"><path d="M3 4h3M3 16h3M3 28h3" strokeWidth="5" />{lines([[12, 4, 20], [12, 16, 20], [12, 28, 20]])}</Svg>
          <Chev className="ml-[10px]" />
          <Svg className="ml-[22px] w-8 h-8"><path d="M2 2h2v5M1 13h4l-4 5h4M1 24h4v6H1" />{lines([[11, 4, 20], [11, 16, 20], [11, 28, 20]])}</Svg>
          <Chev className="ml-[11px]" />
          <Svg className="ml-[22px] w-8 h-8"><path d="M1 16l8-7v4h5v6H9v4z" fill="currentColor" stroke="none" />{lines([[2, 3, 28], [19, 10, 11], [19, 16, 11], [2, 23, 28], [2, 29, 28]])}</Svg>
          <Svg className="ml-[27px] w-8 h-8"><path d="M14 16L6 9v4H1v6h5v4z" fill="currentColor" stroke="none" />{lines([[2, 3, 28], [19, 10, 11], [19, 16, 11], [2, 23, 28], [2, 29, 28]])}</Svg>
          <Svg className="ml-[28px] w-[34px] h-8"><path d="M4 1v30M12 1v30M1 27l3 4 3-4M9 27l3 4 3-4M18 2h14M25 2v29M22 27l3 4 3-4" /></Svg>
          <Chev className="ml-[9px]" />
        </Row>
        <Row>
          <div className="ml-[11px] w-12 h-12 bg-[#fbebdd] flex items-center justify-center"><Svg>{lines([[2, 4, 28], [2, 10, 20], [2, 16, 28], [2, 22, 14], [2, 28, 22]])}</Svg></div>
          <div className="ml-[5px] w-[60px] flex justify-center"><Svg>{lines([[2, 4, 28], [6, 10, 20], [2, 16, 28], [6, 22, 20], [2, 28, 28]])}</Svg></div>
          <div className="w-[60px] flex justify-center"><Svg>{lines([[2, 4, 28], [10, 10, 20], [2, 16, 28], [16, 22, 14], [8, 28, 22]])}</Svg></div>
          <div className="w-[60px] flex justify-center"><Svg>{lines([[2, 4, 28], [2, 10, 28], [2, 16, 28], [2, 22, 28], [2, 28, 28]])}</Svg></div>
          <div className="w-[60px] flex justify-center"><Svg><path d="M1 2v28M31 2v28M5 6h22M9 2L5 6l4 4M23 2l4 4-4 4" />{lines([[6, 15, 20], [6, 21, 20], [6, 27, 20]])}</Svg></div>
          <div className="w-[57px] flex justify-center"><Svg><path d="M8 6H2v20h6M24 6h6v20h-6" />{lines([[9, 12, 14], [9, 17, 14], [9, 22, 14]])}<path d="M16 0v7M12 4l4-4 4 4M16 32v-7M12 28l4 4 4-4" stroke="#a9bdd6" /></Svg></div>
          <Chev />
          <Svg className="ml-[20px] w-8 h-8"><path d="M5 2v28M1 7l4-5 4 5M1 25l4 5 4-5" />{lines([[13, 4, 18], [13, 12, 18], [13, 20, 18], [13, 28, 18]])}</Svg>
          <Chev className="ml-[12px]" />
        </Row>
      </Rows>
      <Sep />
      <div className="ml-[10px] mt-3 w-[574px] h-[136px] shrink-0 flex border-2 border-[#c9c9c9] bg-white text-[#555a68]">
        <div className="grid grid-cols-[repeat(12,44px)] grid-rows-[repeat(3,44px)]">
          {shapeIcons.map((s, i) => <div key={i} className="flex items-center justify-center"><Svg>{s}</Svg></div>)}
        </div>
        <div className="flex-1 border-l-2 border-[#c9c9c9] flex flex-col items-center justify-between py-[18px] text-[#555]">
          <Tri up /><Tri />
          <div className="flex flex-col items-center gap-[3px]"><span className="w-[14px] h-[2px] bg-[#555]" /><Tri /></div>
        </div>
      </div>
      <Rows className="w-[421px]">
        <Row>
          <Svg className="ml-[19px] w-8 h-8"><path d="M0 0h20v20H0z" fill="currentColor" stroke="none" /><circle cx="22" cy="22" r="9" fill="#f5f5f5" /></Svg>
          <Chev className="ml-[10px]" />
          <Svg className="ml-[22px] w-8 h-8"><path d="M0 0h20v20H0z" fill="currentColor" stroke="none" /><circle cx="22" cy="22" r="9" fill="#f5f5f5" /></Svg>
          <Chev className="ml-[11px]" />
          <Svg className="ml-[23px] w-8 h-8"><path d="M2 1v30M8 24h20M14 19l-6 5 6 5" /><path d="M7 2h16v6H7zM7 12h22v5H7z" fill="#d5dae0" stroke="none" /></Svg>
          <Chev className="ml-[9px]" />
        </Row>
        <Row>
          <Svg className="ml-[19px] w-8 h-9"><path d="M14 2L3 16l11 8 12-11zM26 14v8" fill="#c4c8cd" /><path d="M0 25h32v7H0z" fill="#f7b2ac" stroke="none" /></Svg>
          <Chev className="ml-[10px]" />
          <Svg className="ml-[22px] w-8 h-9"><path d="M0 25h32v7H0z" fill="#f7b2ac" stroke="none" /><circle cx="12" cy="16" r="9" /><path d="M30 2L14 25" stroke="#e9b3a9" strokeWidth="3" /></Svg>
          <Chev className="ml-[11px]" />
          <span className="ml-[14px] w-[2px] h-12 bg-[#dadada]" />
          <Svg className="ml-[18px] w-[30px] h-8" stroke="none"><path d="M16 2L2 8v16l14 7 14-7V8z" fill="#b9b9b9" /><path d="M16 2L2 8l14 6 14-6z" fill="#d9d9d9" /><path d="M16 14v17l14-7V8z" fill="#a5a5a5" /></Svg>
          <Chev className="ml-[11px]" />
          <Svg className="ml-[22px] w-8 h-8"><rect x="4" y="4" width="15" height="15" /><rect x="13" y="12" width="15" height="15" /><path d="M1 1h5v5H1zM26 1h5v5h-5zM1 26h5v5H1zM26 26h5v5h-5z" fill="#f5f5f5" /></Svg>
          <Chev className="ml-[11px]" />
          <Svg className="ml-[22px] w-8 h-8"><path d="M27 2h4v28h-4zM2 24h22v7H2z" fill="currentColor" stroke="none" opacity=".6" /><path d="M3 20q0-12 14-12M12 2l7 6-7 6" stroke="#a9bfd8" strokeWidth="3.500" /></Svg>
          <Chev className="ml-[10px]" />
        </Row>
      </Rows>
      <Sep />
      <div className="pl-[10px] flex">
        <Big label="찾기" w={41} icon={<Svg vb="0 0 52 52" className="w-[52px] h-[52px]" stroke="none"><path d="M7 0h12v8H7zM33 0h12v8H33zM1 36h19v16H1zM32 36h19v16H32z" fill="#4f5961" /><path d="M5 9h42l4 25H1z" fill="#9aa0a5" /><path d="M23 9h6v21h-6z" fill="#7a8086" /></Svg>} />
        <Big label="바꾸기" w={61} chev icon={<Svg vb="0 0 56 56" className="w-[56px] h-[56px]"><path d="M2 31L12 2h2l10 29M6 21h14" stroke="#8b8f96" strokeWidth="3" /><path d="M35 28v24h9q8 0 8-7t-8-6h-9M35 28h8q7 0 7 5t-6 6" stroke="#5b7aa8" strokeWidth="4.500" /><path d="M8 36v10q0 2 3 2h12M19 42l7 6-7 7" stroke="#5b7aa8" strokeWidth="4" /></Svg>} />
      </div>
    </div>
  );
}

/* ---------- slide content ---------- */

function Gauge({ cx, base, rx, ry, irx, iry, deg, color }) {
  const a = (deg * Math.PI) / 180;
  const p = (r1, r2, t) => `${cx + r1 * Math.cos(t)} ${base - r2 * Math.sin(t)}`;
  const seg = (a0, a1) => `M${p(rx, ry, a0)}A${rx} ${ry} 0 0 1 ${p(rx, ry, a1)}L${p(irx, iry, a1)}A${irx} ${iry} 0 0 0 ${p(irx, iry, a0)}z`;
  return (
    <svg className="absolute left-0 top-0 w-[2083px] h-[1443px]" viewBox={`${OX} ${OY} 2083 1443`}>
      <path d={seg(Math.PI, 0)} fill="#ededed" stroke="#dcdcdc" strokeWidth="2" />
      <path d={seg(Math.PI, a)} fill={color} />
    </svg>
  );
}

const months = [1, 2, 3, 4, 5, 6, 7, 8, 9, 10, 11, 12];
const before = [9000, 8800, 7600, 7850, 8000, 8700, 9200, 10000, 9000, 9300, 8900, 10000];
const after = [7200, 7750, 5900, 5450, 6400, 6600, 7650, 7600, 7550, 7600, 7500, 8600];

function LineChart({ fx, fx2, fy, fy2, top, lx, lcy, x0, x1, y0, y1, label, labX, labY, step = 7.6 }) {
  const X = (i) => x0 + ((x1 - x0) / 12) * (i + 0.5);
  const Y = (v) => y1 - ((y1 - y0) * v) / 12000;
  const pts = (d) => d.map((v, i) => `${X(i)},${Y(v)}`).join(" ");
  return (
    <svg className="absolute left-0 top-0 w-[2083px] h-[1443px]" viewBox={`${OX} ${OY} 2083 1443`} fill="#444" fontSize="10.500">
      <path d={`M${fx} ${fy}V${fy2}`} stroke="#b5b5b5" />
      {top && <path d={`M${fx} ${fy}H${fx2}`} stroke="#808080" strokeWidth="1.500" />}
      <path d={`M${lx} ${lcy}h31`} stroke="#9bbb59" strokeWidth="1.500" />
      <path d={`M${lx + 10} ${lcy}l5.500-3 5.500 3-5.500 3z`} fill="#9bbb59" />
      <text x={lx + 34} y={lcy + 3} fontSize="9.500" textLength="42" lengthAdjust="spacingAndGlyphs">설치 전</text>
      <path d={`M${lx + 90} ${lcy}h31`} stroke="#808080" strokeWidth="1.500" />
      <path d={`M${lx + 101} ${lcy - 2.5}h9v5h-9z`} fill="#808080" />
      <text x={lx + 125} y={lcy + 3} fontSize="9.500" textLength="41" lengthAdjust="spacingAndGlyphs">설치 후</text>
      {[0, 2, 4, 6, 8, 10, 12].map((k) => {
        const w = k === 0 ? 8 : k < 10 ? 36 : 43;
        return (
          <g key={k}>
            <path d={`M${x0 - 4} ${Y(k * 1000)}H${x1}`} stroke="#c2c2c2" />
            <text x={x0 - 18 - w} y={Y(k * 1000) + 3.5} fontSize="9.500" textLength={w} lengthAdjust="spacingAndGlyphs">{k === 0 ? "0" : k + ",000"}</text>
          </g>
        );
      })}
      <path d={`M${x0} ${y0}V${y1 + 2}` + months.map((m) => `M${x0 + ((x1 - x0) / 12) * m} ${y1}v2`).join("")} stroke="#999" />
      {months.map((m, i) => {
        const w = m > 9 ? 28 : 20;
        return <text key={m} x={X(i) - w / 2} y={y1 + 12} fontSize="9.500" textLength={w} lengthAdjust="spacingAndGlyphs">{m}월</text>;
      })}
      <polyline points={pts(before)} fill="none" stroke="#9bbb59" strokeWidth="1.600" />
      <polyline points={pts(after)} fill="none" stroke="#808080" strokeWidth="1.600" />
      {before.map((v, i) => <path key={i} d={`M${X(i) - 5} ${Y(v)}l5-3 5 3-5 3z`} fill="#9bbb59" />)}
      {after.map((v, i) => <path key={i} d={`M${X(i) - 5} ${Y(v) - 2.5}h10v5h-10z`} fill="#808080" />)}
      {label.split("").map((c, i) => (
        <text key={i} fontSize="9" fontWeight="bold" textAnchor="middle" transform={`translate(${labX} ${labY + i * step}) scale(1.300 .9)${"()".includes(c) ? " rotate(90)" : ""}`} y={"()".includes(c) ? 3 : 4}>{c}</text>
      ))}
    </svg>
  );
}

const green = [316, 330, 332, 332, 332, 325, 317, 328, 330, 332, 332, 332];
const blue = [357, 367, 370, 368, 367, 362, 355, 367, 364, 368, 374, 376];
const red = [357, 367, 370, 368, 367, 362, 357, 490, 486, 490, 496, 498];
const gray = [443, 446, 414, 409, 409, 485, 480, 620, 525, 532, 593, 596];

function BarChart({ x0, x1, y0, y1, ly }) {
  const Y = (v) => y1 - ((y1 - y0) * v) / 700;
  const step = (x1 - x0) / 12;
  const legend = [[1094, "#19ff6e", "기본요금 할인액", 99], [1229, "#1dbcf0", "사용량요금 할인액", 112], [1377, "#f51a1a", "기본요금 절감액", 99], [1513, "#808080", "사용량요금 절감액", 112]];
  return (
    <svg className="absolute left-0 top-0 w-[2083px] h-[1443px]" viewBox={`${OX} ${OY} 2083 1443`} fill="#333">
      {legend.map(([x, c, t, w]) => (
        <g key={x}><path d={`M${x} ${ly - 4.5}h8v7h-8z`} fill={c} /><text x={x + 12} y={ly + 5} fontSize="13" textLength={w} lengthAdjust="spacingAndGlyphs">{t}</text></g>
      ))}
      {[0, 1, 2, 3, 4, 5, 6, 7].map((k) => (
        <g key={k}>
          <path d={`M${x0 - 5} ${Y(k * 100)}H${x1}`} stroke="#b8b8b8" strokeWidth="1.300" />
          <text x={k ? x0 - 37 : x0 - 23} y={Y(k * 100) + 4} fontSize="11" textLength={k ? 21 : 7} lengthAdjust="spacingAndGlyphs">{k * 100}</text>
        </g>
      ))}
      <path d={`M${x0} ${y0}V${y1 + 4}` + months.map((m) => `M${x0 + step * m} ${y1}v4`).join("")} stroke="#999" />
      {months.map((m, i) => {
        const cx = x0 + step * (i + 0.5);
        const w = m > 9 ? 28 : 20;
        const bar = (lo, hi, c) => <path d={`M${cx - 10.5} ${Y(hi)}h21V${Y(lo)}h-21z`} fill={c} />;
        return (
          <g key={m}>
            {bar(0, green[i], "#19ff6e")}{bar(green[i], blue[i], "#1dbcf0")}{bar(blue[i], red[i], "#f51a1a")}{bar(red[i], gray[i], "#808080")}
            <text x={cx - w / 2} y={y1 + 24} fontSize="11.500" textLength={w} lengthAdjust="spacingAndGlyphs">{m}월</text>
          </g>
        );
      })}
      <text transform={`translate(${x0 - 52} ${(y0 + y1) / 2 + 31}) rotate(-90)`} fontSize="17" textLength="98" lengthAdjust="spacingAndGlyphs" fill="#111">금액(백만원)</text>
    </svg>
  );
}

const descRows = [
  { h: 74, t: ["타이틀바(1)", 82], l: [["- 카테고리A>B : 텍스트 출력", 194], ["- 기본값 : 전체>전체", 138]] },
  { h: 72, t: ["타이틀바(2): 기간조회", 151], l: [["- 버튼[다운로드] 클릭 시, 구성 콘텐츠의 테이블 데이터 엑셀", 405], ["다운로드 실행", 95]] },
  { h: 74, t: ["타이틀바(3): 기간조회", 151], l: [["- 버튼[다운로드] 클릭 시, 구성 콘텐츠의 테이블 데이터 엑셀", 405], ["다운로드 실행", 95]] },
  { h: 52, t: ["최신 업데이트 일시 : 화면 진입 시점", 243], l: [["- 표기: 연월일시 : YYYY-MM-DD HH:MM", 295]] },
  { h: 94, t: ["콘텐츠(1)", 67], l: [["- 그래프 : Solid gauge", 157], ["- 대상: 금일 기본요금할인액(누적값), 단위(백만원/일)", 363], ["- DB에서 계산된 값 받아야 함 (현대에서 직접 안내)", 345]] },
  { h: 92, t: ["콘텐츠(2)", 67], l: [["- 그래프 : Solid gauge", 157], ["- 대상: 금일 사용량요금할인액(누적값), 단위(백만원/일)", 378], ["- DB에서 계산된 값 받아야 함 (현대에서 직접 안내)", 345]] },
  { h: 92, t: ["콘텐츠(3)", 67], l: [["- 그래프 : Solid gauge", 157], ["- 대상: 금일 기본요금절감액(누적값), 단위(백만원/일)", 363], ["- DB에서 계산된 값 받아야 함 (현대에서 직접 안내)", 345]] },
  { h: 92, t: ["콘텐츠(4)", 67], l: [["- 그래프 : Solid gauge", 157], ["- 대상: 금일 사용량요금절감액(누적값), 단위(백만원/일)", 378], ["- DB에서 계산된 값 받아야 함 (현대에서 직접 안내)", 345]] },
  { h: 72, t: ["콘텐츠(5): 기간조회 : 검색", 180], l: [["- 기간 검색 (일별/월별/연별)", 193], ["문서 “현대중공업_FEMS_12 공통” 검색조건 참고", 333]] },
  { h: 170, t: ["콘텐츠(6)", 67], l: [["- 그래프 : Stacked column", 187], ["- 대상: 기본요금할인액/사용량요금할인액/기본요금절감액/", 399], ["사용량요금절감액 (모두 누적값)", 216], ["- 범례: 기본요금할인액/사용량요금할인액/기본요금절감액/", 399], ["사용량요금절감액", 119], ["- 축", 25], ["•", 0, "Y축: 금액, 단위(백만원/일)", 182]] },
  { h: 73, t: ["콘텐츠(7): 기간조회 : 검색", 180], l: [["- 기간 검색 (월별/연별)", 157], ["문서 “현대중공업_FEMS_12 공통” 검색조건 참고", 333]] },
  { h: 171, t: ["콘텐츠(8)", 67], l: [["- 그래프 : Time data with irregular intervals", 312], ["- 대상: ESS 설치 전 전력요금 합계 /ESS 설치 후 전력요금 합", 405], ["계 (모두 누적값)", 110], ["- 범례: ESS 설치 전 / ESS 설치 후", 225], ["- 축", 25], ["•", 0, "Y축: 금액, 단위(백만원)", 161], ["- DB에서 계산된 값 받아야 함 (현대에서 직접 안내)", 345]] },
];
const funcRows = [
  ["A", "이동", "(엑셀 다운로드) 데이터 테이블", 206, 35], ["B", "갱신", "갱신 데이터 출력", 114, 33], ["C", "갱신", "그래프의 데이터 통합 테이블 출력", 229, 35],
  ["D", "이동", "(엑셀 다운로드) 데이터 테이블", 206, 35], ["E", "갱신", "갱신 데이터 출력", 114, 33],
];

function DescTable() {
  return (
    <Obj x={2532} y={598} w={482} h={1372} className="flex flex-col border border-[#b2b2b2] text-black text-[16.500px] leading-[19.300px]">
      <div className="h-[37px] shrink-0 bg-[#595959] text-white flex items-center pl-2 text-[20px] font-medium"><Fit w={75}>화면 설명</Fit></div>
      {descRows.map((r, i) => (
        <div key={i} className="flex shrink-0 border-b border-[#b2b2b2] bg-white" style={{ height: r.h }}>
          <div className="w-12 h-full bg-[#f1f1f1] border-r border-[#a6a6a6] text-center font-semibold pt-[9px]">{i + 1}</div>
          <div className="pl-[19px] pt-[9px] flex flex-col">
            <div className="h-[19.300px] flex items-center font-bold"><span className="w-[13px] text-[15px] leading-none pt-[6px]">*</span><Fit w={r.t[1]}>{r.t[0]}</Fit></div>
            {r.l.map(([t, w, t2, w2], k) => (
              <div key={k} className="h-[19.300px] flex items-center"><Fit w={w}>{t}</Fit>{t2 && <Fit w={w2} className="ml-[31px]">{t2}</Fit>}</div>
            ))}
          </div>
        </div>
      ))}
      <div className="h-[35px] shrink-0 bg-[#595959] text-white flex items-center pl-2 font-semibold"><Fit w={64}>기능 설명</Fit></div>
      {funcRows.map(([a, b, c, w, h], i) => (
        <div key={a} className={"flex shrink-0 border-b border-[#b2b2b2] " + (i < 4 ? "bg-white" : "")} style={{ height: h }}>
          <div className="w-12 pt-[2px] bg-[#f1f1f1] border-r border-[#a6a6a6] flex items-center justify-center font-semibold">{a}</div>
          <div className="w-[65px] pt-[2px] border-r border-[#b2b2b2] flex items-center pl-2"><Fit w={30}>{b}</Fit></div>
          <div className="pt-[2px] flex items-center pl-2"><Fit w={w}>{c}</Fit></div>
        </div>
      ))}
    </Obj>
  );
}

function Header({ full }) {
  return (
    <>
      <Obj x={931} y={521} w={2084} h={57} className="border border-[#808080] bg-white" />
      <Obj x={931} y={521} w={113} h={57} className="bg-[#595959]" />
      <Obj x={1898} y={521} w={121} h={57} className="bg-[#595959]" />
      <Obj x={2648} y={521} w={91} h={57} className="bg-[#595959]" />
      <T x={952} cy={559} w={58} s={21} className="text-white font-medium">경로명</T>
      <T x={1919} cy={559} w={38} s={21} className="text-white">설명</T>
      <T x={2669} cy={559} s={19} className="text-white font-semibold">ID</T>
      {full && (
        <>
          <T x={1052} cy={559} w={185} s={21}>{"홈>ESS>절감액 조회"}</T>
          <T x={2027} cy={559} w={201} s={21}>Layout G : 3단 (신규)</T>
          <T x={2748} cy={559} s={20}>-</T>
        </>
      )}
    </>
  );
}

const Arrow = ({ x, y }) => (
  <Obj x={x} y={y} w={15} h={11}><svg viewBox="0 0 15 11" className="w-full h-full"><path d="M0 0h15L7.500 11z" /></svg></Obj>
);
const redText = "text-[#ff0000] font-bold";

function DateBar({ dx = 0, dy = 0 }) {
  const sel = "border border-[#7f7f7f] bg-white";
  return (
    <>
      <Obj x={996 + dx} y={944 + dy} w={115} h={33} className={sel} />
      <T x={1006 + dx} cy={961 + dy} w={37} s={21}>일별</T>
      <Arrow x={1087 + dx} y={955 + dy} />
      <Obj x={1128 + dx} y={950 + dy} w={2} h={28} className="bg-[#a08080]" />
      <Obj x={1147 + dx} y={943 + dy} w={91} h={35} className={sel} />
      <T x={1156 + dx} cy={961 + dy} w={50} s={22}>2017</T>
      <Arrow x={1215 + dx} y={954 + dy} />
      <T x={1250 + dx} cy={967 + dy} s={20}>년</T>
      <Obj x={1284 + dx} y={943 + dy} w={76} h={35} className={sel} />
      <T x={1310 + dx} cy={961 + dy} s={22} className="text-[#888]">1</T>
      <Arrow x={1337 + dx} y={954 + dy} />
      <T x={1367 + dx} cy={967 + dy} s={20}>월</T>
      <Obj x={1393 + dx} y={943 + dy} w={76} h={35} className={sel} />
      <T x={1419 + dx} cy={961 + dy} s={22} className="text-[#76879f]">1</T>
      <Arrow x={1446 + dx} y={954 + dy} />
      <T x={1477 + dx} cy={967 + dy} s={20}>일</T>
      <T x={1502 + dx} cy={967 + dy} s={20}>~</T>
      <Obj x={1515 + dx} y={943 + dy} w={76} h={35} className={sel} />
      <T x={1536 + dx} cy={961 + dy} w={24} s={22} className="text-[#888]">31</T>
      <Arrow x={1570 + dx} y={954 + dy} />
      <T x={1598 + dx} cy={967 + dy} s={20}>일</T>
      <Obj x={1621 + dx} y={946 + dy} w={101} h={35} className="border border-[#7f7f7f] bg-[#f2f2f2]" />
      <T x={1653 + dx} cy={965 + dy} w={39} s={22} className="text-[#555]">조회</T>
    </>
  );
}

const colX = [1005, 1115, 1233, 1351, 1469, 1586, 1705];
const headCells = [
  [["구분", 40], ["($단위$)", 80]],
  [["전체", 40], ["절감액", 59], ["(백만원)", 74]],
  [["기본요금", 79], ["할인액", 59], ["(백만원)", 74]],
  [["전력량요금", 99], ["할인액", 59], ["(백만원)", 74]],
  [["기본요금", 79], ["절감액", 59], ["(백만원)", 74]],
  [["전력량요금", 99], ["절감액", 59], ["(백만원)", 74]],
];

function DataTable() {
  const cell = "border-r border-b border-[#a6a6a6] flex flex-col items-center justify-center";
  return (
    <Obj x={1005} y={1192} w={701} h={287} className="flex flex-col border-l border-t border-[#a6a6a6] text-[21px] leading-[31.400px]">
      <div className="flex h-[103px] bg-[#e9e9e9] font-bold">
        {headCells.map((c, i) => (
          <div key={i} className={cell} style={{ width: colX[i + 1] - colX[i] }}>{c.map(([t, w]) => <Fit key={t} w={w}>{t}</Fit>)}</div>
        ))}
      </div>
      {["06", "07", "08"].map((r, k) => (
        <div key={r} className={"flex bg-white " + (k === 1 ? "h-[60px]" : "h-[61.500px]")}>
          {headCells.map((_, i) => (
            <div key={i} className={cell} style={{ width: colX[i + 1] - colX[i] }}>{i ? <Fit w={63}>$숫자$</Fit> : <Fit w={25}>{r}</Fit>}</div>
          ))}
        </div>
      ))}
    </Obj>
  );
}

function MainSlide() {
  return (
    <div className="relative w-[2083px] h-[1443px] bg-white text-black font-['Open_Sans','Noto_Sans_CJK_KR',sans-serif]">
      <Obj x={932} y={520} w={2083} h={1443} className="border border-[#a6a6a6]" />
      <Header full />
      <Obj x={939} y={598} w={1589} h={1347} className="border border-[#bcbcbc]" />
      <Obj x={981} y={616} w={1527} h={294} className="border-2 border-[#595959]" />
      <Obj x={981} y={694} w={1527} h={2} className="bg-[#595959]" />
      <T x={999} cy={660} w={232} s={24.500} className="font-bold">| 전력요금 절감액 현황</T>
      <T x={1279} cy={656} w={517} s={32} className={redText}>1) SQL (1)의 ‘일별’ 조건으로 개별호출</T>
      <T x={2252} cy={658} w={224} s={25}>{"카테고리A>카테고리B"}</T>
      <T x={1110} cy={725} w={181} s={27.500}>기본요금 할인액</T>
      <T x={1473} cy={729} w={207} s={27.500}>사용량요금 할인액</T>
      <T x={1819} cy={729} w={241} s={27.500}>예상 기본요금 절감액</T>
      <T x={2214} cy={723} w={207} s={27.500}>사용량요금 절감액</T>
      <Gauge cx={1193} base={862} rx={145} ry={98} irx={87} iry={58} deg={83} color="#ddd214" />
      <Gauge cx={1562} base={860} rx={146} ry={102} irx={87} iry={61} deg={117.8} color="#a8d41e" />
      <Gauge cx={1936} base={859} rx={141} ry={99} irx={85} iry={59} deg={26.6} color="#e0614a" />
      <Gauge cx={2308} base={848} rx={141} ry={86} irx={85} iry={52} deg={153.4} color="#65c333" />
      <Obj x={1139} y={813} w={88} h={32} className="bg-white overflow-hidden"><div className="ml-[20px] mt-[9px] text-[27px] leading-[34px] font-medium"><Fit w={47}>300</Fit></div></Obj>
      <T x={1150} cy={868} w={87} s={21.500} className="text-[#808080]">백만원/일</T>
      <T x={1073} cy={872} s={14} className="text-[#777]">0</T>
      <T x={1291} cy={872} w={34} s={14} className="text-[#777]">1600</T>
      <T x={1546} cy={820} w={40} s={27} className="font-medium">1.3</T>
      <T x={1520} cy={858} w={87} s={21.500} className="text-[#808080]">백만원/일</T>
      <T x={1442} cy={870} s={14} className="text-[#777]">0</T>
      <T x={1665} cy={870} w={25} s={14} className="text-[#777]">200</T>
      <Obj x={1882} y={788} w={87} h={50} className="bg-white" />
      <T x={1902} cy={815} w={48} s={27} className="font-medium">300</T>
      <T x={1895} cy={852} w={86} s={21.500} className="text-[#808080]">백만원/월</T>
      <T x={1819} cy={868} s={14} className="text-[#777]">0</T>
      <T x={2036} cy={868} w={25} s={14} className="text-[#777]">200</T>
      <T x={2290} cy={822} w={38} s={27} className="font-medium">1.3</T>
      <T x={2262} cy={851} w={87} s={21.500} className="text-[#808080]">백만원/일</T>
      <T x={2192} cy={857} s={14} className="text-[#777]">0</T>
      <T x={2407} cy={857} w={25} s={14} className="text-[#777]">200</T>
      <T x={1315} cy={770} w={492} s={32} className={redText}>2) SQL(2) 각 게이지 항목의 MAX값</T>
      <T x={1315} cy={810} w={248} s={32} className={redText}>- 통으로 작성 가능</T>
      <Obj x={954} y={918} w={792} h={77} className="border-[5px] border-[#ff0000] rounded-[4px]" />
      <DateBar />
      <Obj x={985} y={1018} w={750} h={913} className="border-2 border-t-[3px] border-[#595959]" />
      <Obj x={985} y={1115} w={750} h={2} className="bg-[#595959]" />
      <T x={954} cy={1019} w={149} s={32} className={redText}>3) SQL (1)</T>
      <T x={994} cy={1066} w={275} s={24.500} className="font-bold">| 전기요금 절감액 기간조회</T>
      <Obj x={1610} y={1044} w={101} h={36} className="border border-[#7f7f7f] bg-[#f2f2f2]" />
      <T x={1622} cy={1063} w={79} s={22} className="text-[#555]">다운로드</T>
      <T x={1019} cy={1152} w={143} s={25}>항목별 절감액</T>
      <DataTable />
      <BarChart x0={1075} x1={1684} y0={1567} y1={1832} ly={1544} />
      <Obj x={1755} y={916} w={751} h={1020} className="border-2 border-[#595959]" />
      <Obj x={1755} y={993} w={751} h={2} className="bg-[#595959]" />
      <Obj x={1758} y={999} w={748} h={2} className="bg-[#b0b0b0]" />
      <T x={1767} cy={958} w={299} s={24.500} className="font-bold">| ESS 설치전후 비교 기간조회</T>
      <T x={2103} cy={955} w={400} s={32} className={redText}>4) SQL (3) + 로직 (전기요금)</T>
      <T x={1774} cy={1028} w={292} s={26} className="font-light">ESS 설치 전후 전기요금 비교</T>
      <LineChart fx={1795} fx2={2449} fy={1047.500} fy2={1215} top lx={2041} lcy={1057} x0={1901} x1={2432} y0={1071} y1={1197} label="금액(백만원)" labX={1823} labY={1115} step={6.800} />
      <T x={1778} cy={1241} w={292} s={26} className="font-light">ESS 설치 전후 피크전력 비교</T>
      <LineChart fx={1801} fx2={2443} fy={1261} fy2={1436} lx={2049} lcy={1271} x0={1907} x1={2443} y0={1285} y1={1418} label="전력(kW)" labX={1830} labY={1336} step={7} />
      <T x={1766} cy={1465} w={292} s={26} className="font-light">ESS 설치 전후 기본요금 비교</T>
      <LineChart fx={1801} fx2={2445} fy={1488} fy2={1680} top lx={2042} lcy={1500} x0={1905} x1={2428} y0={1516} y1={1659} label="금액(백만원)" labX={1829} labY={1565} step={7.900} />
      <T x={1766} cy={1703} w={315} s={26} className="font-light">ESS 설치 전후 전력량요금 비교</T>
      <LineChart fx={1795} fx2={2440} fy={1730} fy2={1915} top lx={2037} lcy={1741} x0={1900} x1={2423} y0={1757} y1={1895} label="금액(백만원)" labX={1824} labY={1804} step={7.600} />
      <DescTable />
    </div>
  );
}

const Dot = ({ x, y, className = "bg-[#ff0000]" }) => <Obj x={x - 17} y={y - 17} w={34} h={34} className={"rounded-full " + className} />;

// The wireframe page that precedes the annotated one.
function WireSlide({ desc = true }) {
  return (
    <div className="relative w-[2083px] h-[1443px] bg-white text-black font-['Open_Sans','Noto_Sans_CJK_KR',sans-serif]">
      <Header full />
      <Obj x={939} y={598} w={1589} h={1347} className="border border-[#bcbcbc]" />
      <Obj x={961} y={688} w={1540} h={401} className="border-[4px] border-[#777]" />
      <Obj x={961} y={772} w={1540} h={4} className="bg-[#777]" />
      <T x={981} cy={730} w={230} s={24} className="font-bold">| 전력요금 절감액 현황</T>
      <T x={2240} cy={728} w={224} s={24}>{"카테고리A>카테고리B"}</T>
      <T x={2100} cy={784} w={378} s={22}>최신 업데이트 : YYYY-MM-DD HH:MM</T>
      {[[1092, "기본요금 할인액", 181], [1456, "사용량요금 할인액", 207], [1850, "예상 기본요금 절감액", 241], [2205, "사용량요금 절감액", 207]].map(([x, t, w]) => (
        <T key={x} x={x} cy={831} w={w} s={28} className="font-medium">{t}</T>
      ))}
      <Gauge cx={1174} base={1039} rx={147} ry={146} irx={88} iry={88} deg={83} color="#ddd02e" />
      <Gauge cx={1549} base={1043} rx={147} ry={146} irx={88} iry={88} deg={117} color="#a8d232" />
      <Gauge cx={1924} base={1043} rx={143} ry={148} irx={85} iry={88} deg={27} color="#dc604c" />
      <Gauge cx={2299} base={1039} rx={145} ry={146} irx={87} iry={88} deg={153} color="#65c240" />
      {[[1150, "300"], [1532, "1.3"], [1903, "300"], [2280, "1.3"]].map(([x, t]) => (
        <React.Fragment key={x}>
          <T x={x} cy={999} s={28} className="font-semibold">{t}</T>
          <T x={x - 20} cy={1031} w={87} s={22} className="text-[#888]">백만원/일</T>
        </React.Fragment>
      ))}
      <Obj x={961} y={1111} w={758} h={808} className="border-[4px] border-[#777]" />
      <Obj x={1738} y={1111} w={768} h={808} className="border-[4px] border-[#777]" />
      <Obj x={961} y={1194} w={758} h={2} className="bg-[#888]" />
      <Obj x={1738} y={1194} w={768} h={2} className="bg-[#888]" />
      <Obj x={961} y={1316} w={758} h={3} className="bg-[#888]" />
      <Obj x={1738} y={1316} w={768} h={3} className="bg-[#888]" />
      <T x={975} cy={1153} w={273} s={24} className="font-bold">| 전기요금 절감액 기간조회</T>
      <T x={1758} cy={1153} w={297} s={24} className="font-bold">| ESS 설치전후 비교 기간조회</T>
      <Obj x={1605} y={1130} w={101} h={40} className="border-2 border-[#999] bg-[#eee]" />
      <T x={1620} cy={1150} w={79} s={22} className="text-[#555]">다운로드</T>
      <Obj x={2372} y={1130} w={101} h={40} className="border-2 border-[#999] bg-[#eee]" />
      <T x={2386} cy={1150} w={79} s={22} className="text-[#555]">다운로드</T>
      <DateBar dx={-10} dy={293} />
      <DateBar dx={770} dy={293} />
      <Obj x={965} y={1208} w={1534} h={80} className="border-[6px] border-[#f33]" />
      <T x={998} cy={1360} w={143} s={26}>항목별 절감액</T>
      <T x={1758} cy={1360} w={291} s={26}>ESS 설치 전후 전기요금 비교</T>
      <Obj x={1490} y={1388} w={90} h={38} className="border-2 border-[#999]" />
      <T x={1505} cy={1407} w={60} s={22} className="text-[#2f7fc0]">그래프</T>
      <Obj x={1590} y={1388} w={96} h={38} className="border-2 border-[#999] bg-[#eee]" />
      <T x={1606} cy={1407} w={60} s={22}>테이블</T>
      <BarChart x0={1052} x1={1663} y0={1503} y1={1810} ly={1475} />
      <LineChart fx={1800} fx2={2449} fy={1470} fy2={1840} lx={2041} lcy={1482} x0={1891} x1={2447} y0={1518} y1={1789} label="금액(백만원)" labX={1823} labY={1620} step={12} />
      <T x={1758} cy={1894} w={291} s={26}>ESS 설치 전후 피크전력 비교</T>
      <Obj x={1742} y={1446} w={764} h={461} className="border-[6px] border-[#f33]" />
      {[[957, 730], [1068, 829], [1433, 829], [1822, 829], [2180, 830], [2073, 784], [954, 1148], [1732, 1148], [954, 1256], [1747, 1256], [975, 1358], [1740, 1358], [1740, 1891]].map(([x, y]) => <Dot key={x + "-" + y} x={x} y={y} />)}
      {[[1578, 1152], [2358, 1150], [1632, 1218], [2387, 1218], [1594, 1437]].map(([x, y]) => <Dot key={x} x={x} y={y} className="bg-[#4a92cf]" />)}
      {desc && <DescTable />}
    </div>
  );
}

function TextSlide() {
  return (
    <div className="relative w-[2083px] h-[1443px] bg-white text-black font-['Open_Sans','Noto_Sans_CJK_KR',sans-serif]">
      <Header />
      <Obj x={931} y={578} w={2084} h={2} className="bg-[#ccc]" />
      <T x={1320} cy={1164} w={1143} s={100} className="font-bold">ESS 절감액 페이지 개선검토</T>
      <T x={1320} cy={1284} w={893} s={100} className="font-bold">1) SQL을 쓰는 부분들</T>
      <T x={1320} cy={1404} w={1340} s={100} className="font-bold">2) 로직/UX에 맞게끔 바꾼다면...</T>
    </div>
  );
}

// Formula tables laid over the faded wireframe; measures are thumbnail pixels.
const ovText = "text-[5.600px] leading-[7px] whitespace-nowrap";
function Sheet({ x = 53, y, w = 327, split = 36, rows }) {
  return (
    <div className="absolute flex flex-col bg-[#d9ecee] border border-[#333]" style={{ left: x, top: y, width: w }}>
      {rows.map(([h, k, v, n], i) => (
        <div key={i} className="flex border-b border-[#444] last:border-b-0" style={{ height: h }}>
          <div className={"shrink-0 border-r border-[#333] pt-px pl-[3px] " + ovText} style={{ width: split }}>{k}</div>
          <div className={"flex-1 pl-[3px] pt-px " + ovText + (n ? " text-center" : "")}>{v}</div>
        </div>
      ))}
    </div>
  );
}
const Mark = ({ x, y, c, t }) => (
  <div className={"absolute w-[9px] h-[8px] rounded-full text-white text-[5px] leading-[8px] text-center " + c} style={{ left: x - 4.5, top: y - 4 }}>{t}</div>
);
const Note = ({ x, y, c = "text-[#e00]", children }) => <div className={"absolute text-[5px] leading-none whitespace-nowrap " + c} style={{ left: x, top: y - 3 }}>{children}</div>;

const overlays = {
  "1-1": {
    sheets: [
      { y: 0, rows: [[10, "설명", "ESS에 충전했던 전기를 ‘최대부하시간대’에 방전함으로써 받는 인센티브의 금일 현재까지의 누적값"], [23, "수식", "(Σ(방전량−충전량))×기본요금 요율×가중치×가중치÷해당월 평일 일수", 1], [9, "기타", "단위 유의 (MW & MWh), (MWh & kWh), (백만원/일)"]] },
      { y: 105, rows: [[10, "설명", "ESS에 충전했던 전기를 ‘최대부하시간대’에 방전함으로써 받는 인센티브의 하루 최대값."], [16, "수식", "설치된 Batt 용량×기본요금 요율×가중치×가중치÷해당월 평일 일수", 1], [9, "기타", "단위 유의 (MW & MWh), (MWh & kWh), (백만원/일)"]] },
      { y: 145, rows: [[10, "설명", "‘경부하시간대’에 ESS를 충전함으로써 받는 인센티브의 금일 현재까지의 누적값."], [19, "수식", "(Σ충전량)×경부하시간대 요율×½×가중치", 1], [9, "기타", "단위 유의 (MW & MWh), (MWh & kWh), (백만원/일)"]] },
      { y: 189, rows: [[10, "설명", "‘경부하시간대’에 ESS를 충전함으로써 받는 인센티브의 하루 최대값."], [16, "수식", "(설치된 Batt 용량)×경부하시간대 요율×½×가중치", 1], [9, "기타", "단위 유의 (MW & MWh), (MWh & kWh), (백만원/일)"]] },
    ],
    reds: [[52, 4], [52, 108], [52, 149], [52, 193]],
    oranges: [[167, 13], [220, 14], [254, 14], [295, 13], [341, 14], [142, 27], [127, 120], [190, 117], [219, 117], [256, 116], [302, 117], [142, 127], [207, 158], [249, 155], [276, 155], [297, 155], [190, 201], [227, 199], [254, 199], [275, 197]],
    notes: [[171, 21, "(kWh)  (kWh)"], [336, 31, "÷1,000,000"], [341, 122, "÷1,000,000"], [334, 162, "÷1,000,000"], [314, 204, "÷1,000,000"], [210, 169, "(kWh)"], [180, 212, "(kWh)"], [170, 117, "(kWh)"]],
    blues: [[156, 27, "(hour)"], [223, 27, "(원/kW)"], [266, 27, "(no unit)"], [303, 27, "(no unit)"], [156, 127, "(hour)"], [181, 127, "(원/kW)"], [226, 127, "(no unit)"], [262, 127, "(no unit)"], [245, 169, "(원/kWh)"], [300, 169, "(no unit)"], [222, 212, "(원/kWh)"], [250, 212, "(no unit)"]],
    lines: "M52 4L45 86M16 84L50 96M16 84L88 96M16 84L157 96M16 84L230 96M52 108L60 98M52 149L108 95M52 193L134 100",
  },
  "1-2": {
    sheets: [
      { x: 55, w: 330, split: 44, y: 4, rows: [[22, "설명", <>ESS로 ‘요금적용전력’을 감소시켜 절감시킨 기본요금. 예상값. 월단위.<br />+ESS설치 이전 ‘요금적용전력’과 설치 후 ‘요금적용전력(예상)’의 차이를 이용하여 계산<br />+지난 12개월의 피크전력 데이터 필요.</>], [11, "수식", "((ESS 적용 전 요금적용전력*)−(ESS 적용 후 요금적용전력**))×기본요금 요율", 1], [15, <>ESS 적용 전 요금<br />적용전력*</>, <>ESS 적용 전 요금적용전력 = max(지난 12개월 피크 이용하여 결정한 요금적용전력, 이번 달 현재까지의 피크전력)<br /><span className="text-[#e00] pl-10 font-bold">(전력수전량 - ESS 충전 출력 + ESS 방전 출력)</span></>], [16, <>ESS 적용 후<br />요금적용전력**</>, <>ESS 적용 후 요금적용전력 = max(지난 12개월 피크 이용하여 결정한 요금적용전력, 이번 달 현재까지의 피크전력)<br /><span className="text-[#e00] pl-10 font-bold">(전력수전량)</span></>]] },
      { y: 105, rows: [[10, "설명", "ESS로 ‘요금적용전력’을 감소시켜 절감시킬 수 있는 기본요금의 최대값. 월단위."], [11, "수식", "설치된 PCS 용량×기본요금 요율", 1], [9, "기타", "단위 유의 (MW & MWh), (MWh & kWh), (백만원/월)"]] },
      { y: 144, rows: [[10, "설명", "ESS 운영을 통해, 싼 시간에 충전, 비싼 시간에 방전하여 절감하는 전력량요금 절감액."], [19, "수식", "(Σ (방전량−충전량)×전력량요금요율)", 1], [9, "기타", "단위 유의 (MW & MWh), (MWh & kWh), (백만원/일) / 전력량요금 요율은 시간대별로 다름"]] },
      { y: 189, rows: [[10, "설명", "ESS 운영을 통해, 싼 시간에 충전, 비싼 시간에 방전하여 절감하는 전력량요금 절감액의 최대값."], [11, "수식", "(설치된 Batt 용량)×(최대부하시간대 요율 − 경부하시간대 요율)", 1]] },
    ],
    reds: [[52, 4], [52, 108], [52, 149], [52, 193]],
    oranges: [[187, 21], [232, 19], [299, 21], [194, 119], [271, 114], [157, 203], [317, 202]],
    notes: [[330, 28, "÷1,000,000"], [283, 121, "÷1,000,000"], [305, 166, "÷1,000,000"], [330, 204, "÷1,000,000"], [215, 171, "(kWh)   (kWh)"], [181, 212, "(kWh)"]],
    blues: [[295, 33, "(원/kW)"], [249, 128, "(원/kW)"], [271, 171, "(원/kWh)"], [216, 212, "(원/kWh)"], [276, 212, "(원/kWh)"]],
    lines: "M52 4L178 87M52 104L199 99M52 149L248 90M52 193L267 100",
  },
  "2-1": {
    sheets: [
      { y: 0, rows: [[10, "설명", "기본요금 할인액."], [15, "수식 (일별)", <>-지난 기간의 경우: (5-1)의 수식에서, 데이터 계산 기간이 ‘금일 현 시점까지’→ ‘해당일, 종일’<br />-오늘의 경우: 수식 (5-1)과 동일</>], [11, "수식 (월별)", "상기 일별 데이터의 기간 내 누적 합"], [11, "수식 (년별)", "상기 월별 데이터의 기간 내 누적 합"]] },
      { y: 53, rows: [[11, "설명", "전력량요금 할인액."], [15, "수식 (일별)", <>-지난 기간의 경우: (6-1)의 수식에서, 데이터 계산 기간이 ‘금일 현 시점까지’→ ‘해당일, 종일’<br />-오늘의 경우: 수식 (6-1)과 동일</>], [11, "수식 (월별)", "상기 일별 데이터의 기간 내 누적 합"]] },
    ],
    reds: [[52, 3], [52, 57]], oranges: [], notes: [], blues: [], lines: "M50 4L45 86M52 57L50 86",
  },
};

function OverlayThumb({ id }) {
  const o = overlays[id];
  return (
    <>
      <Mini><WireSlide desc={false} /></Mini>
      <div className="absolute inset-0 bg-white/50" />
      <div className="absolute inset-0 text-[#222] font-['Open_Sans','Noto_Sans_CJK_KR',sans-serif]">
        {o.sheets.map((s, i) => <Sheet key={i} {...s} />)}
        {id === "1-1" && <div className="absolute left-[2px] top-[64px] w-[28px] h-5 bg-[#d9ecee] border border-[#333] text-[7px] leading-[8px] pl-[3px] pt-[1px] font-semibold whitespace-nowrap">“0”<br />고정값</div>}
        <svg viewBox="0 0 384 266" className="absolute inset-0 w-full h-full"><path d={o.lines} fill="none" stroke="#f44" strokeWidth=".7" strokeDasharray="2 1" /></svg>
        {o.reds.map(([x, y]) => <Mark key={x + "-" + y} x={x} y={y} c="bg-[#f01010]" />)}
        {o.oranges.map(([x, y], i) => <Mark key={i} x={x} y={y} c="bg-[#f79420]" t="I" />)}
        {o.notes.map(([x, y, t], i) => <Note key={i} x={x} y={y} c="text-[#e00] italic font-bold">{t}</Note>)}
        {o.blues.map(([x, y, t], i) => <Note key={i} x={x} y={y} c="text-[#2f7fc0]">{t}</Note>)}
        <div className="absolute left-0 top-0 w-[34px] h-[33px] rounded-full rounded-tl-none bg-[#0c1f57] text-white text-[19px] leading-[32px] text-center">{id}</div>
      </div>
    </>
  );
}

const Mini = ({ children }) => <div className="absolute left-0 top-0 w-[2083px] h-[1443px] origin-top-left scale-[0.1846]">{children}</div>;

function Thumb({ n, active, children }) {
  return (
    <div className="flex h-[269px] mb-[32.400px] shrink-0">
      <div className={"w-[75px] text-[28px] leading-[32px] font-medium text-center pr-[7px] " + (active ? "text-[#ffab55]" : "text-black")}>{n}</div>
      <div className="relative w-[388px] h-[269px] border-2 border-[#bcbcbc] bg-white overflow-hidden">
        {children}
        {active && <div className="absolute -inset-[2px] border-[6px] border-[#ffab55]" />}
      </div>
    </div>
  );
}

function Thumbnails() {
  return (
    <div className="w-[493px] shrink-0 h-full overflow-hidden border-r-2 border-[#d9d9d9] bg-[linear-gradient(90deg,#dcdcdc_0%,#ececec_4%,#f4f4f4_12%,#f5f5f5_100%)]">
      <div className="-mt-[254px] flex flex-col">
        <Thumb />
        <Thumb n="3"><Mini><WireSlide /></Mini></Thumb>
        <Thumb n="4"><Mini><TextSlide /></Mini></Thumb>
        <Thumb n="5" active><Mini><MainSlide /></Mini></Thumb>
        <Thumb n="6"><OverlayThumb id="1-1" /></Thumb>
        <Thumb n="7"><OverlayThumb id="1-2" /></Thumb>
        <Thumb n="8"><OverlayThumb id="2-1" /></Thumb>
      </div>
    </div>
  );
}

/* ---------- canvas with rulers ---------- */

const vNums = [9, 8, 7, 6, 5, 4, 3, 2, 1, 0, 1, 2, 3, 4, 5, 6, 7, 8, 9];
const hNums = [13, 12, 11, 10, ...vNums, 10, 11, 12, 13];

function VRuler() {
  return (
    <div className="w-[50px] shrink-0 bg-[#f5f5f5] pt-[110px] pl-[1px]">
      <div className="w-[49px] h-[1443px] border-2 border-[#a8a8a8] flex flex-col pt-[2px] text-[20px] leading-none text-[#333] overflow-hidden">
        {vNums.map((n, i) => (
          <div key={i} className="h-[75.550px] shrink-0 flex flex-col items-end justify-between">
            <span className="w-[4px] h-[2px] bg-[#999] -mt-px" />
            <div className="w-full flex items-center"><span className="pl-1 text-center flex-1">{n}</span><span className="w-[4px] h-[2px] bg-[#999]" /></div>
            <span className="h-[1px]" />
          </div>
        ))}
      </div>
    </div>
  );
}

function HRuler() {
  return (
    <div className="h-[49px] shrink-0 bg-[#f5f5f5] pl-[314px]">
      <div className="w-[2083px] h-[39px] border-2 border-[#a8a8a8] flex pl-[20px] text-[20px] leading-none text-[#333] overflow-hidden">
        {hNums.map((n, i) => (
          <div key={i} className="w-[75.600px] h-full shrink-0 flex items-end justify-between">
            <span className="w-[2px] h-[9px] bg-[#aaa] -ml-px" />
            <div className="h-full flex flex-col items-center justify-between pt-[7px]"><span>{n}</span><span className="w-[2px] h-[5px] bg-[#bbb]" /></div>
            <span className="w-[1px]" />
          </div>
        ))}
      </div>
    </div>
  );
}

function VersionTable() {
  return (
    <div className="absolute left-[2422px] top-[139px] w-[292px] bg-white border border-r-0 border-[#b2b2b2] text-black font-['Open_Sans','Noto_Sans_CJK_KR',sans-serif]">
      <div className="h-[38px] pt-[3px] bg-[#ff0000] text-white text-[21px] font-semibold flex items-center pl-2"><Fit w={73}>Version</Fit></div>
      {["0.1", "", ""].map((v, i) => (
        <div key={i} className="h-[41px] flex border-t border-[#b2b2b2]">
          <div className="w-[49px] bg-[#f1f1f1] border-r border-[#b2b2b2] text-[22px] font-semibold flex items-center pl-[9px]">{v && <Fit w={30}>{v}</Fit>}</div>
          {v && <div className="pl-5 text-[21.500px] flex items-center"><Fit w={78}>최초작성</Fit></div>}
        </div>
      ))}
    </div>
  );
}

function StatusBar() {
  const ic = "w-[27px] h-[26px] text-[#555]";
  return (
    <footer className="h-[47px] shrink-0 flex items-center pt-[2px] bg-white text-[#1e1e1e] text-[25px] leading-none border-t border-[#e8e8e8] rounded-b-lg">
      <Fit w={148} className="ml-[11px]">슬라이드 5/12</Fit>
      <Fit w={66} className="ml-[33px] text-[24.500px]">한국어</Fit>
      <Fit w={506} className="ml-auto text-[24.500px]">2018.1.28 오후 5:04에 마지막으로 저장되었습니다.</Fit>
      <svg viewBox="0 0 32 32" className="ml-[35px] w-8 h-8"><circle cx="16" cy="16" r="16" fill="#f95b5c" /><path d="M16 4l10 10h-6v5h-8v-5H6zM12 21h8v2h-8zM12 25h8v2h-8z" fill="#fff" /></svg>
      <Svg vb="0 0 26 26" className={"ml-[31px] " + ic}><path d="M1 1h20l4 4v20H1z" fill="#555" /><path d="M6 2h12v8H6zM5 14h16v11H5z" fill="#fff" stroke="none" /><path d="M8 17h10M8 21h10M15 3v5" /></Svg>
      <Svg vb="0 0 26 26" className={"ml-[34px] " + ic}><path d="M1 1h24v24H1zM7 1v24M10 15h12v8H10zM10 21h12" /></Svg>
      <div className="ml-[15px] w-[60px] h-[36px] bg-[#d0d0d0] flex items-center justify-center"><Svg vb="0 0 26 26" className={ic}><path d="M1 1h24v24H1z" /><path d="M5 5h16v7H5zM8 16h10v4H8z" fill="currentColor" stroke="none" /></Svg></div>
      <Svg vb="0 0 26 26" className={"ml-[16px] " + ic}><path d="M1 2h24v22H1zM13 2v23M4 7h6M4 11h6M4 15h6M4 19h6M16 7h6M16 11h6M16 15h6M16 19h6" strokeWidth="1.600" /></Svg>
      <Svg vb="0 0 26 26" className={"ml-[33px] " + ic}><path d="M1 1h24v24H1z" /><path d="M9 7l9 6-9 6z" fill="currentColor" stroke="none" /></Svg>
      <Fit w={68} className="ml-[42px] text-[26px]">200%</Fit>
      <span className="ml-[24px] w-[19px] h-[5px] bg-[#555]" />
      <div className="ml-[11px] w-[176px] flex items-center"><span className="w-[102px] h-[6px] rounded-l bg-[#409cf7]" /><span className="w-[23px] h-[23px] rounded-full bg-white border border-[#bbb] shadow shrink-0" /><span className="flex-1 h-[6px] rounded-r bg-[#c4c4c4]" /></div>
      <Svg vb="0 0 19 19" className="ml-[11px] mr-[42px] w-[19px] h-[19px] text-[#555]"><path d="M0 9.500h19M9.500 0v19" strokeWidth="5" /></Svg>
    </footer>
  );
}

export default function App() {
  return (
    <div className="w-[3360px] h-[2100px] flex flex-col overflow-hidden font-['Inter','Noto_Sans_CJK_KR',sans-serif] bg-[#12649a]">
      <MenuBar />
      <div className="h-[2056px] flex">
        <Dock />
        <div className="w-[3285px] pt-[2px] flex flex-col bg-[linear-gradient(90deg,#1f7fae,#4c8fa8_40%,#8c9a9c_60%,#1d80b4)]">
          <TitleBar />
          <Tabs />
          <Ribbon />
          <div className="h-[64px] shrink-0 bg-[#feecbd] flex items-center text-[#2b2b2b] text-[24.500px]">
            <Fit w={551} className="ml-[47px]">이 문서를 폰과 태블릿에서도 보고 편집할 수 있습니다.</Fit>
            <Fit w={141} className="ml-auto text-[#a87f56]">지금 연결하기</Fit>
            <Svg vb="0 0 20 20" className="ml-[27px] mr-[30px] w-5 h-5 text-[#a58339]"><path d="M1 1l18 18M19 1L1 19" strokeWidth="4" /></Svg>
          </div>
          <div className="h-[1643px] shrink-0 flex">
            <Thumbnails />
            <VRuler />
            <div className="w-[2742px] flex flex-col">
              <HRuler />
              <div className="h-[1567px] flex">
                <div className="relative w-[2714px] h-full overflow-hidden bg-[#e5e5e5]">
                  <div className="absolute left-[314px] top-[61px]"><MainSlide /></div>
                  <VersionTable />
                </div>
                <div className="flex-1 bg-[#fafafa] border-r-[3px] border-[#eee]" />
              </div>
              <div className="flex-1 bg-[#fafafa]" />
            </div>
          </div>
          <StatusBar />
        </div>
      </div>
    </div>
  );
}
